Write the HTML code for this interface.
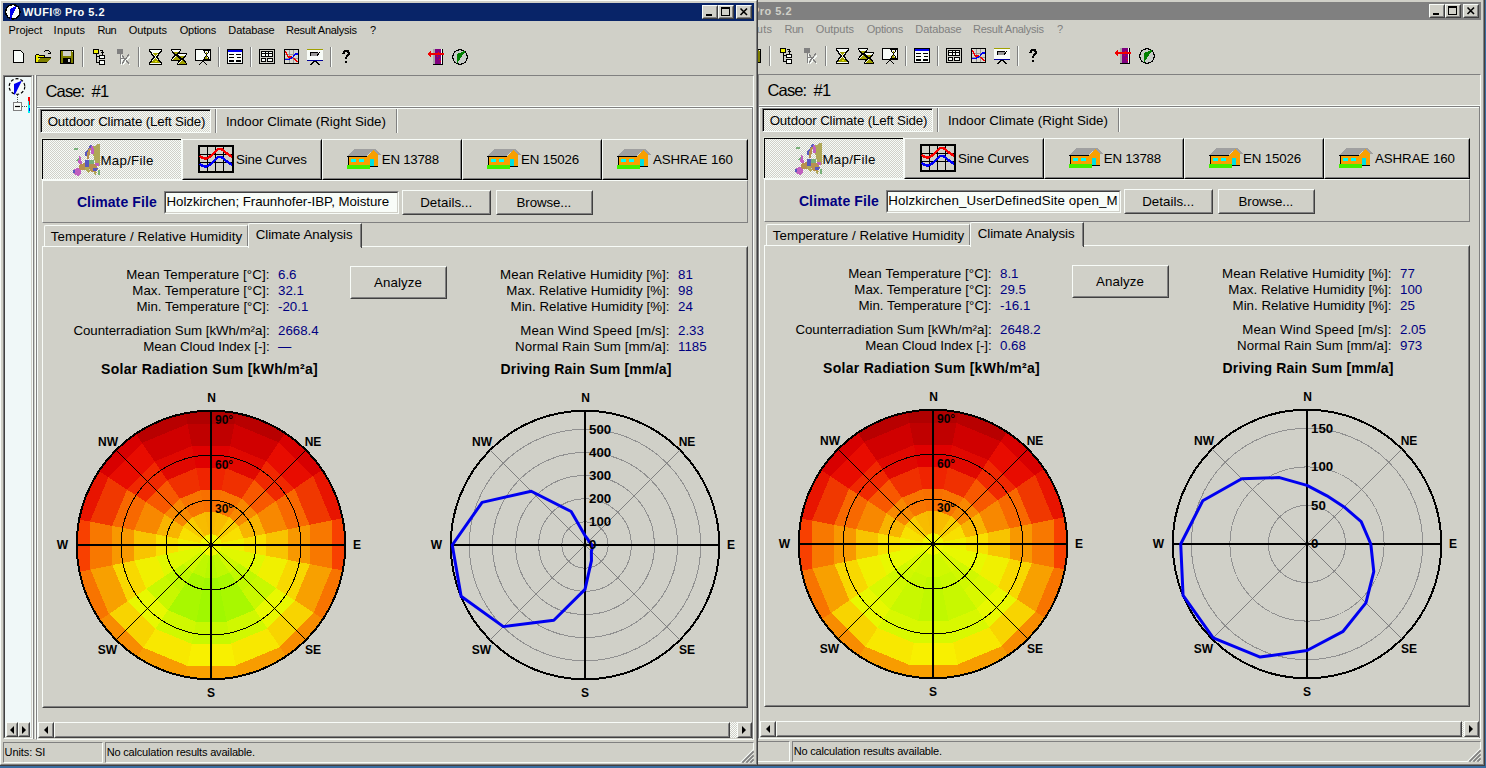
<!DOCTYPE html>
<html><head><meta charset="utf-8"><title>WUFI Pro 5.2</title>
<style>html,body{margin:0;padding:0} body{width:1486px;height:768px;position:relative;overflow:hidden;background:#386ca0;font-family:'Liberation Sans', sans-serif}</style>
</head><body>
<div style="position:absolute;left:0;top:0;width:1486px;height:768px;clip-path:inset(-2px 1px 2px 686px)">
<div style="position:absolute;left:686px;top:-2px;width:799px;height:768px;box-sizing:border-box;border-top:1px solid #d0d0c8;border-left:1px solid #d0d0c8;border-bottom:1px solid #404040;border-right:1px solid #404040;background:#d0d0c8;"></div>
<div style="position:absolute;left:687px;top:-1px;width:797px;height:766px;box-sizing:border-box;border-top:1px solid #f8fcf8;border-left:1px solid #f8fcf8;border-bottom:1px solid #808080;border-right:1px solid #808080;"></div>
<div style="position:absolute;left:690px;top:2px;width:791px;height:18px;background:#808080"></div>
<svg style="position:absolute;left:692px;top:3px" width="16" height="16" viewBox="0 0 16 16" shape-rendering="crispEdges" shape-rendering="auto"><circle cx="7.8" cy="7.8" r="7.2" fill="#f8fcf8" stroke="#000000" stroke-width="1.5"/><polygon points="5,5.2 11.8,1.8 5.6,15.6 5,15.6" fill="#0000f0"/></svg>
<div style="position:absolute;top:5.69px;font:bold 11px/11px 'Liberation Sans', sans-serif;color:#d0d0c8;white-space:pre;left:709.90px;letter-spacing:0.473px;">WUFI® Pro 5.2</div>
<div style="position:absolute;left:1429px;top:4px;width:16px;height:14px;box-sizing:border-box;border-top:1px solid #f8fcf8;border-left:1px solid #f8fcf8;border-bottom:1px solid #404040;border-right:1px solid #404040;background:#d0d0c8;"></div><div style="position:absolute;left:1430px;top:5px;width:14px;height:12px;box-sizing:border-box;border-top:1px solid #d0d0c8;border-left:1px solid #d0d0c8;border-bottom:1px solid #808080;border-right:1px solid #808080;"></div><div style="position:absolute;left:1433px;top:13px;width:6px;height:2px;background:#000000"></div>
<div style="position:absolute;left:1445px;top:4px;width:16px;height:14px;box-sizing:border-box;border-top:1px solid #f8fcf8;border-left:1px solid #f8fcf8;border-bottom:1px solid #404040;border-right:1px solid #404040;background:#d0d0c8;"></div><div style="position:absolute;left:1446px;top:5px;width:14px;height:12px;box-sizing:border-box;border-top:1px solid #d0d0c8;border-left:1px solid #d0d0c8;border-bottom:1px solid #808080;border-right:1px solid #808080;"></div><div style="position:absolute;left:1448px;top:6px;width:9px;height:9px;box-sizing:border-box;border:1px solid #000000;border-top-width:2px"></div>
<div style="position:absolute;left:1463px;top:4px;width:16px;height:14px;box-sizing:border-box;border-top:1px solid #f8fcf8;border-left:1px solid #f8fcf8;border-bottom:1px solid #404040;border-right:1px solid #404040;background:#d0d0c8;"></div><div style="position:absolute;left:1464px;top:5px;width:14px;height:12px;box-sizing:border-box;border-top:1px solid #d0d0c8;border-left:1px solid #d0d0c8;border-bottom:1px solid #808080;border-right:1px solid #808080;"></div><svg style="position:absolute;left:1463px;top:4px" width="16" height="14"><path d="M4.5 3.5 L11 10 M11 3.5 L4.5 10" stroke="#000000" stroke-width="1.6"/></svg>
<div style="position:absolute;top:23.69px;font:normal 11px/11px 'Liberation Sans', sans-serif;color:#808080;white-space:pre;left:695.60px;letter-spacing:-0.097px;">Project</div>
<div style="position:absolute;top:23.69px;font:normal 11px/11px 'Liberation Sans', sans-serif;color:#808080;white-space:pre;left:740.60px;letter-spacing:0.307px;">Inputs</div>
<div style="position:absolute;top:23.69px;font:normal 11px/11px 'Liberation Sans', sans-serif;color:#808080;white-space:pre;left:784.40px;letter-spacing:-0.431px;">Run</div>
<div style="position:absolute;top:23.69px;font:normal 11px/11px 'Liberation Sans', sans-serif;color:#808080;white-space:pre;left:815.70px;letter-spacing:-0.054px;">Outputs</div>
<div style="position:absolute;top:23.69px;font:normal 11px/11px 'Liberation Sans', sans-serif;color:#808080;white-space:pre;left:866.80px;letter-spacing:-0.252px;">Options</div>
<div style="position:absolute;top:23.69px;font:normal 11px/11px 'Liberation Sans', sans-serif;color:#808080;white-space:pre;left:915.30px;letter-spacing:-0.096px;">Database</div>
<div style="position:absolute;top:23.69px;font:normal 11px/11px 'Liberation Sans', sans-serif;color:#808080;white-space:pre;left:973.10px;letter-spacing:-0.271px;">Result Analysis</div>
<div style="position:absolute;top:23.69px;font:normal 11px/11px 'Liberation Sans', sans-serif;color:#808080;white-space:pre;left:1057.00px;letter-spacing:-0.500px;">?</div>
<svg style="position:absolute;left:700px;top:49px" width="11" height="13" viewBox="0 0 11 13" shape-rendering="crispEdges" ><rect x="0" y="0" width="8" height="1" fill="#000000"/><rect x="0" y="0" width="1" height="13" fill="#000000"/><rect x="0" y="12" width="11" height="1" fill="#000000"/><rect x="10" y="3" width="1" height="10" fill="#000000"/><rect x="8" y="1" width="1" height="1" fill="#000000"/><rect x="9" y="2" width="1" height="1" fill="#000000"/><rect x="1" y="1" width="7" height="11" fill="#f8fcf8"/><rect x="8" y="2" width="1" height="10" fill="#f8fcf8"/><rect x="9" y="3" width="1" height="9" fill="#f8fcf8"/></svg>
<svg style="position:absolute;left:722px;top:49px" width="16" height="13" viewBox="0 0 16 13" shape-rendering="crispEdges" ><rect x="10" y="0" width="4" height="1" fill="#000000"/><rect x="9" y="1" width="1" height="1" fill="#000000"/><rect x="14" y="1" width="1" height="1" fill="#000000"/><rect x="15" y="2" width="1" height="2" fill="#000000"/><rect x="14" y="3" width="1" height="1" fill="#000000"/><rect x="13" y="3" width="3" height="1" fill="#000000"/><rect x="1" y="4" width="3" height="1" fill="#000000"/><rect x="0" y="5" width="1" height="8" fill="#000000"/><rect x="4" y="5" width="6" height="1" fill="#000000"/><rect x="1" y="5" width="3" height="7" fill="#f0f000"/><rect x="4" y="6" width="6" height="1" fill="#f0f000"/><rect x="9" y="6" width="1" height="1" fill="#000000"/><polygon points="2,13 5,8 16,8 12,13" fill="#808000"/><rect x="0" y="12" width="12" height="1" fill="#000000"/><rect x="3" y="7" width="13" height="1" fill="#000000"/></svg>
<svg style="position:absolute;left:747px;top:49px" width="14" height="14" viewBox="0 0 14 14" shape-rendering="crispEdges" ><rect x="0" y="0" width="14" height="14" fill="#000000"/><rect x="1" y="1" width="12" height="12" fill="#808000"/><rect x="3" y="1" width="8" height="5" fill="#d0d0c8"/><rect x="3" y="8" width="8" height="5" fill="#000000"/><rect x="8" y="9" width="2" height="3" fill="#d0d0c8"/><rect x="12" y="1" width="1" height="1" fill="#f8fcf8"/></svg>
<div style="position:absolute;left:769px;top:46px;width:1px;height:20px;background:#808080"></div><div style="position:absolute;left:770px;top:46px;width:1px;height:20px;background:#f8fcf8"></div>
<svg style="position:absolute;left:780px;top:48px" width="12" height="16" viewBox="0 0 12 16" shape-rendering="crispEdges" ><rect x="0" y="0" width="6" height="5" fill="#000000"/><rect x="1" y="1" width="4" height="3" fill="#f0f000"/><rect x="3" y="5" width="1" height="9" fill="#000000"/><rect x="3" y="7" width="3" height="1" fill="#000000"/><rect x="3" y="13" width="3" height="1" fill="#000000"/><rect x="7" y="1" width="3" height="1" fill="#000000"/><rect x="9" y="2" width="1" height="1" fill="#000000"/><rect x="8" y="3" width="3" height="1" fill="#000000"/><rect x="9" y="4" width="1" height="2" fill="#000000"/><rect x="6" y="6" width="6" height="4" fill="#000000"/><rect x="7" y="7" width="4" height="2" fill="#f8fcf8"/><rect x="6" y="11" width="6" height="5" fill="#000000"/><rect x="7" y="12" width="4" height="3" fill="#f8fcf8"/></svg>
<svg style="position:absolute;left:804px;top:48px" width="15" height="16" viewBox="0 0 15 16" shape-rendering="crispEdges" shape-rendering="auto"><g transform="translate(1,1)" opacity="1"><path d="M3.5 5 V16 M4 10 H9 M5 7 L12 15 M12 6 L5 15" stroke="#f8fcf8" stroke-width="1.2" fill="none"/></g><rect x="0" y="0" width="6" height="5" fill="#808080"/><rect x="1" y="0" width="4" height="1" fill="#808080"/><rect x="3" y="5" width="1" height="10" fill="#808080"/><path d="M4 9.5 H10 M5 6.5 L12 14.5 M12 5.5 L5 14.5" stroke="#808080" stroke-width="1.3" fill="none"/><rect x="7" y="8" width="2" height="1" fill="#d0d0c8"/></svg>
<div style="position:absolute;left:825px;top:46px;width:1px;height:20px;background:#808080"></div><div style="position:absolute;left:826px;top:46px;width:1px;height:20px;background:#f8fcf8"></div>
<svg style="position:absolute;left:836px;top:48px" width="13" height="16" viewBox="0 0 13 16" shape-rendering="crispEdges" shape-rendering="auto"><path d="M0.5 0.5 H12.5 V2 L7.5 8 L12.5 14 V15.5 H0.5 V14 L5.5 8 L0.5 2 Z" fill="#f8fcf8" stroke="#000000" stroke-width="1.4"/><path d="M4 4 H9 L6.5 7 Z M6.5 9 L11 14 H2 Z" fill="#a0a000"/><rect x="6" y="12" width="2" height="1" fill="#f0f000"/></svg>
<svg style="position:absolute;left:858px;top:48px" width="17" height="16" viewBox="0 0 17 16" shape-rendering="crispEdges" shape-rendering="auto"><g><path d="M0.5 0.5 H9.5 V1.5 L5.5 6 L9.5 10.5 V11.5 H0.5 V10.5 L4.5 6 L0.5 1.5 Z" fill="#f8fcf8" stroke="#000000" stroke-width="1.2"/><path d="M3 3 H7 L5 5.5 Z M5 7 L8.5 10.5 H1.5 Z" fill="#a0a000"/></g><g transform="translate(6,4)"><path d="M0.5 0.5 H9.5 V1.5 L5.5 6 L9.5 10.5 V11.5 H0.5 V10.5 L4.5 6 L0.5 1.5 Z" fill="#f8fcf8" stroke="#000000" stroke-width="1.2"/><path d="M3 3 H7 L5 5.5 Z M5 7 L8.5 10.5 H1.5 Z" fill="#a0a000"/></g></svg>
<svg style="position:absolute;left:882px;top:48px" width="16" height="16" viewBox="0 0 16 16" shape-rendering="crispEdges" shape-rendering="auto"><rect x="0.5" y="0.5" width="15" height="11" fill="#f8fcf8" stroke="#000000"/><path d="M8.5 1.5 H14.5 L11.5 6 L14.5 10.5 H8.5 L11.5 6 Z" fill="#f8fcf8" stroke="#000000" stroke-width="1"/><path d="M10 2.5 H13 L11.5 5 Z M11.5 7 L13.5 10 H9.5 Z" fill="#a0a000"/><path d="M4 16 L8 12 L12 16" stroke="#000000" fill="none"/></svg>
<div style="position:absolute;left:905px;top:46px;width:1px;height:20px;background:#808080"></div><div style="position:absolute;left:906px;top:46px;width:1px;height:20px;background:#f8fcf8"></div>
<svg style="position:absolute;left:914px;top:48px" width="16" height="15" viewBox="0 0 16 15" shape-rendering="crispEdges" ><rect x="0" y="0" width="16" height="15" fill="#000000"/><rect x="1" y="1" width="14" height="13" fill="#f8fcf8"/><rect x="1" y="1" width="14" height="2" fill="#0000f0"/><rect x="2" y="5" width="5" height="1" fill="#000000"/><rect x="9" y="5" width="5" height="1" fill="#000000"/><rect x="2" y="8" width="5" height="1" fill="#000000"/><rect x="10" y="8" width="4" height="1" fill="#000000"/><rect x="2" y="11" width="5" height="2" fill="#000000"/><rect x="9" y="11" width="5" height="2" fill="#000000"/></svg>
<div style="position:absolute;left:937px;top:46px;width:1px;height:20px;background:#808080"></div><div style="position:absolute;left:938px;top:46px;width:1px;height:20px;background:#f8fcf8"></div>
<svg style="position:absolute;left:946px;top:48px" width="16" height="15" viewBox="0 0 16 15" shape-rendering="crispEdges" ><rect x="0" y="0" width="16" height="15" fill="#000000"/><rect x="1" y="1" width="14" height="13" fill="#d0d0c8"/><rect x="2" y="2" width="12" height="1" fill="#000000"/><rect x="2" y="2" width="1" height="6" fill="#000000"/><rect x="13" y="2" width="1" height="6" fill="#000000"/><rect x="2" y="4" width="12" height="1" fill="#000000"/><rect x="2" y="7" width="12" height="1" fill="#000000"/><rect x="6" y="2" width="1" height="6" fill="#000000"/><rect x="9" y="2" width="1" height="6" fill="#000000"/><rect x="3" y="3" width="3" height="1" fill="#f8fcf8"/><rect x="7" y="3" width="2" height="1" fill="#f8fcf8"/><rect x="10" y="3" width="3" height="1" fill="#f8fcf8"/><rect x="3" y="5" width="3" height="2" fill="#f8fcf8"/><rect x="7" y="5" width="2" height="2" fill="#f8fcf8"/><rect x="10" y="5" width="3" height="2" fill="#f8fcf8"/><rect x="2" y="9" width="5" height="4" fill="#000000"/><rect x="3" y="10" width="3" height="2" fill="#f8fcf8"/><rect x="8" y="9" width="6" height="4" fill="#000000"/><rect x="9" y="10" width="4" height="2" fill="#f8fcf8"/></svg>
<svg style="position:absolute;left:971px;top:48px" width="15" height="15" viewBox="0 0 15 15" shape-rendering="crispEdges" shape-rendering="auto"><rect x="0" y="0" width="15" height="15" fill="#000000"/><rect x="1" y="1" width="13" height="13" fill="#d8d8d0"/><rect x="5" y="1" width="1" height="13" fill="#989898"/><rect x="9" y="1" width="1" height="13" fill="#989898"/><rect x="1" y="5" width="13" height="1" fill="#989898"/><rect x="1" y="9" width="13" height="1" fill="#989898"/><path d="M1.5 2 L4 8 L8 8 L13.5 13" stroke="#f00000" fill="none" stroke-width="1.2"/><path d="M1.5 11 L6 10 L9 8 L11 5 H13.5" stroke="#0000f0" fill="none" stroke-width="1.2"/></svg>
<svg style="position:absolute;left:994px;top:48px" width="16" height="16" viewBox="0 0 16 16" shape-rendering="crispEdges" shape-rendering="auto"><rect x="0" y="0" width="16" height="1" fill="#a0a000"/><rect x="0" y="1" width="16" height="11" fill="#f8fcf8"/><rect x="0" y="11" width="16" height="1" fill="#000080"/><rect x="1" y="11" width="14" height="1" fill="#0000a0"/><rect x="3" y="3" width="8" height="1" fill="#000000"/><rect x="3" y="3" width="1" height="4" fill="#000000"/><rect x="4" y="4" width="7" height="3" fill="#989898"/><path d="M10 7 L13 3" stroke="#000000"/><path d="M3 16 L8 12 L13 16" stroke="#000000" fill="none" stroke-width="1.2"/></svg>
<div style="position:absolute;left:1017px;top:46px;width:1px;height:20px;background:#808080"></div><div style="position:absolute;left:1018px;top:46px;width:1px;height:20px;background:#f8fcf8"></div>
<svg style="position:absolute;left:1029px;top:49px" width="8" height="13" viewBox="0 0 8 13" shape-rendering="crispEdges" shape-rendering="auto"><path d="M1.5 3.5 Q1.5 0.8 4 0.8 Q6.8 0.8 6.8 3.5 Q6.8 5 4.8 6.5 Q4 7.2 4 9" stroke="#000000" stroke-width="2.2" fill="none"/><rect x="3" y="10.5" width="2.4" height="2.4" fill="#000000"/></svg>
<svg style="position:absolute;left:1115px;top:48px" width="16" height="16" viewBox="0 0 16 16" shape-rendering="crispEdges" shape-rendering="auto"><rect x="5" y="15" width="10" height="1" fill="#000000"/><rect x="14" y="0" width="1" height="16" fill="#000000"/><rect x="5" y="0" width="2" height="15" fill="#a8a8a8"/><rect x="7" y="0" width="6" height="15" fill="#800080"/><rect x="13" y="0" width="1" height="15" fill="#f8fcf8"/><path d="M0.5 5 H15.5" stroke="#f00000" stroke-width="1.6"/><path d="M3 2.5 L0.5 5 L3 7.5" stroke="#f00000" stroke-width="1.6" fill="none"/><rect x="10" y="3" width="1" height="1" fill="#f80000"/><rect x="9" y="7" width="1" height="1" fill="#f80000"/><rect x="11" y="10" width="1" height="1" fill="#f80000"/><rect x="12" y="12" width="1" height="1" fill="#f80000"/></svg>
<svg style="position:absolute;left:1139px;top:48px" width="16" height="16" viewBox="0 0 16 16" shape-rendering="crispEdges" shape-rendering="auto"><circle cx="8" cy="8" r="7.3" fill="#c8ccc8" stroke="#000000" stroke-width="1.1"/><polygon points="4.5,5 14,1.5 4.5,15" fill="#008000"/></svg>
<div style="position:absolute;left:758px;top:74px;width:723px;height:665px;box-sizing:border-box;border-top:1px solid #808080;border-left:1px solid #808080;border-bottom:1px solid #f8fcf8;border-right:1px solid #f8fcf8;"></div>
<div style="position:absolute;top:82.03px;font:normal 16.5px/16.5px 'Liberation Sans', sans-serif;color:#000000;white-space:pre;left:767.60px;letter-spacing:-0.893px;">Case:  #1</div>
<div style="position:absolute;left:759px;top:105px;width:721px;height:1px;background:#f8fcf8"></div>
<div style="position:absolute;left:759px;top:106px;width:721px;height:1px;background:#808080"></div>
<div style="position:absolute;left:759px;top:107px;width:1px;height:631px;background:#f8fcf8"></div>
<div style="position:absolute;left:759px;top:107px;width:721px;height:1px;background:#f8fcf8"></div>
<div style="position:absolute;left:1479px;top:107px;width:1px;height:631px;background:#808080"></div>
<div style="position:absolute;left:762px;top:108px;width:171px;height:24px;box-sizing:border-box;border-top:1px solid #808080;border-left:1px solid #808080;border-bottom:1px solid #f8fcf8;border-right:1px solid #f8fcf8;background-color:#f8fcf8;background-image:linear-gradient(45deg,#d0d0c8 25%,transparent 25%,transparent 75%,#d0d0c8 75%),linear-gradient(45deg,#d0d0c8 25%,transparent 25%,transparent 75%,#d0d0c8 75%);background-size:2px 2px;background-position:0 0,1px 1px;"></div><div style="position:absolute;left:763px;top:109px;width:169px;height:22px;box-sizing:border-box;border-top:1px solid #000000;border-left:1px solid #000000"></div>
<div style="position:absolute;top:113.74px;font:normal 13.3px/13.3px 'Liberation Sans', sans-serif;color:#000000;white-space:pre;left:769.70px;letter-spacing:-0.158px;">Outdoor Climate (Left Side)</div>
<div style="position:absolute;left:937px;top:108px;width:1px;height:24px;background:#808080"></div><div style="position:absolute;left:938px;top:108px;width:1px;height:24px;background:#f8fcf8"></div>
<div style="position:absolute;top:113.74px;font:normal 13.3px/13.3px 'Liberation Sans', sans-serif;color:#000000;white-space:pre;left:947.90px;letter-spacing:-0.013px;">Indoor Climate (Right Side)</div>
<div style="position:absolute;left:1118px;top:108px;width:1px;height:24px;background:#808080"></div><div style="position:absolute;left:1119px;top:108px;width:1px;height:24px;background:#f8fcf8"></div>
<div style="position:absolute;left:763px;top:137px;width:141px;height:42px;box-sizing:border-box;border-top:1px solid #e0e4d8;border-left:1px solid #e0e4d8;border-bottom:1px solid #f8fcf8;border-right:1px solid #f8fcf8;background-color:#f8fcf8;background-image:linear-gradient(45deg,#d0d0c8 25%,transparent 25%,transparent 75%,#d0d0c8 75%),linear-gradient(45deg,#d0d0c8 25%,transparent 25%,transparent 75%,#d0d0c8 75%);background-size:2px 2px;background-position:0 0,1px 1px;"></div><div style="position:absolute;left:764px;top:138px;width:139px;height:40px;box-sizing:border-box;border-top:1px solid #000000;border-left:1px solid #000000"></div>
<svg style="position:absolute;left:792px;top:141px" width="32" height="36" viewBox="0 0 32 36" shape-rendering="crispEdges" shape-rendering="crispEdges"><polygon points="4,6 8,6 8,8 4,8" fill="#78b078"/><polygon points="23,4 26,4 27,2 30,2 30,24 26,24 24,16 23,12" fill="#b0a858"/><polygon points="20,3 22,3 21,6 18,10 17,14 15,14 15,11 18,7" fill="#5858c0"/><polygon points="19,6 21,6 20,10 19,17 17,17 17,11" fill="#b89050"/><polygon points="21,4 23,4 24,8 24,12 21,12 21,8" fill="#c060c0"/><polygon points="9,14 11,15 12,22 9,22 8,20" fill="#c060c0"/><polygon points="6,18 8,16 9,17 7,20" fill="#78b078"/><polygon points="10,22 15,21 16,26 14,28 10,28 9,25" fill="#b89050"/><polygon points="15,18 19,18 19,25 15,25" fill="#5858c0"/><polygon points="19,18 24,18 24,22 19,22" fill="#78b078"/><polygon points="19,22 26,22 28,27 25,30 21,30 19,26" fill="#b89050"/><polygon points="25,21 29,21 29,24 26,24" fill="#c060c0"/><polygon points="15,25 19,25 20,30 18,31 15,28" fill="#b0a858"/><polygon points="23,26 28,26 27,29 23,29" fill="#5858c0"/><polygon points="4,27 8,26 11,28 11,31 8,34 5,33 3,31" fill="#c060c0"/><polygon points="3,28 5,28 5,31 3,31" fill="#5858c0"/><polygon points="24,30 27,30 26,33 24,32" fill="#b0a858"/><polygon points="28,28 30,28 30,33 28,33" fill="#78b078"/></svg>
<div style="position:absolute;top:152.74px;font:normal 13.3px/13.3px 'Liberation Sans', sans-serif;color:#000000;white-space:pre;left:822.50px;letter-spacing:0.258px;">Map/File</div>
<div style="position:absolute;left:904px;top:138px;width:140px;height:41px;box-sizing:border-box;border-top:1px solid #f8fcf8;border-left:1px solid #f8fcf8;border-bottom:1px solid #000000;border-right:1px solid #000000;"></div>
<div style="position:absolute;left:905px;top:139px;width:138px;height:39px;box-sizing:border-box;border-top:1px solid #d0d0c8;border-left:1px solid #d0d0c8;border-bottom:1px solid #808080;border-right:1px solid #808080;"></div>
<svg style="position:absolute;left:920px;top:144px" width="36" height="28" viewBox="0 0 36 28" shape-rendering="crispEdges" shape-rendering="auto"><rect x="0" y="0" width="36" height="28" fill="#000000"/><rect x="2" y="2" width="32" height="24" fill="#d0d0c8"/><rect x="9" y="2" width="1" height="24" fill="#000000"/><rect x="17" y="2" width="1" height="24" fill="#000000"/><rect x="25" y="2" width="1" height="24" fill="#000000"/><rect x="2" y="9" width="32" height="1" fill="#000000"/><rect x="2" y="17" width="32" height="1" fill="#000000"/><path d="M2 11 Q6 15 10 13 T18 6 T27 7 L34 12" stroke="#f80000" stroke-width="2.4" fill="none"/><path d="M2 19 Q6 23 10 21 T18 14 T27 15 L34 20" stroke="#0000f8" stroke-width="2.4" fill="none"/></svg>
<div style="position:absolute;top:151.74px;font:normal 13.3px/13.3px 'Liberation Sans', sans-serif;color:#000000;white-space:pre;left:958.00px;letter-spacing:-0.158px;">Sine Curves</div>
<div style="position:absolute;left:1044px;top:138px;width:140px;height:41px;box-sizing:border-box;border-top:1px solid #f8fcf8;border-left:1px solid #f8fcf8;border-bottom:1px solid #000000;border-right:1px solid #000000;"></div>
<div style="position:absolute;left:1045px;top:139px;width:138px;height:39px;box-sizing:border-box;border-top:1px solid #d0d0c8;border-left:1px solid #d0d0c8;border-bottom:1px solid #808080;border-right:1px solid #808080;"></div>
<svg style="position:absolute;left:1068px;top:148px" width="35" height="20" viewBox="0 0 35 20" shape-rendering="crispEdges" shape-rendering="auto"><polygon points="1,7 9,0 29,0 35,6 28,6 22,0" fill="#a0a0a0"/><polygon points="1,7 8,0 27,0 21,7" fill="#a0a0a0"/><path d="M1 7.5 H21" stroke="#000000" stroke-width="1.2"/><rect x="3" y="8" width="18" height="8" fill="#f8a000"/><polygon points="21,7 27,1 32,6 32,17 21,17" fill="#f8a000"/><rect x="5" y="10" width="5" height="3" fill="#00fcf8"/><rect x="13" y="10" width="5" height="3" fill="#00fcf8"/><rect x="24" y="10" width="4" height="7" fill="#00e0e0"/><rect x="1" y="16" width="23" height="4" fill="#40f000"/><rect x="24" y="17" width="8" height="1" fill="#000000"/><rect x="2" y="8" width="1" height="8" fill="#000000"/></svg>
<div style="position:absolute;top:151.74px;font:normal 13.3px/13.3px 'Liberation Sans', sans-serif;color:#000000;white-space:pre;left:1103.80px;letter-spacing:-0.264px;">EN 13788</div>
<div style="position:absolute;left:1184px;top:138px;width:140px;height:41px;box-sizing:border-box;border-top:1px solid #f8fcf8;border-left:1px solid #f8fcf8;border-bottom:1px solid #000000;border-right:1px solid #000000;"></div>
<div style="position:absolute;left:1185px;top:139px;width:138px;height:39px;box-sizing:border-box;border-top:1px solid #d0d0c8;border-left:1px solid #d0d0c8;border-bottom:1px solid #808080;border-right:1px solid #808080;"></div>
<svg style="position:absolute;left:1208px;top:148px" width="35" height="20" viewBox="0 0 35 20" shape-rendering="crispEdges" shape-rendering="auto"><polygon points="1,7 9,0 29,0 35,6 28,6 22,0" fill="#a0a0a0"/><polygon points="1,7 8,0 27,0 21,7" fill="#a0a0a0"/><path d="M1 7.5 H21" stroke="#000000" stroke-width="1.2"/><rect x="3" y="8" width="18" height="8" fill="#f8a000"/><polygon points="21,7 27,1 32,6 32,17 21,17" fill="#f8a000"/><rect x="5" y="10" width="5" height="3" fill="#00fcf8"/><rect x="13" y="10" width="5" height="3" fill="#00fcf8"/><rect x="24" y="10" width="4" height="7" fill="#00e0e0"/><rect x="1" y="16" width="23" height="4" fill="#40f000"/><rect x="24" y="17" width="8" height="1" fill="#000000"/><rect x="2" y="8" width="1" height="8" fill="#000000"/></svg>
<div style="position:absolute;top:151.74px;font:normal 13.3px/13.3px 'Liberation Sans', sans-serif;color:#000000;white-space:pre;left:1243.00px;letter-spacing:-0.149px;">EN 15026</div>
<div style="position:absolute;left:1324px;top:138px;width:146px;height:41px;box-sizing:border-box;border-top:1px solid #f8fcf8;border-left:1px solid #f8fcf8;border-bottom:1px solid #000000;border-right:1px solid #000000;"></div>
<div style="position:absolute;left:1325px;top:139px;width:144px;height:39px;box-sizing:border-box;border-top:1px solid #d0d0c8;border-left:1px solid #d0d0c8;border-bottom:1px solid #808080;border-right:1px solid #808080;"></div>
<svg style="position:absolute;left:1338px;top:148px" width="35" height="20" viewBox="0 0 35 20" shape-rendering="crispEdges" shape-rendering="auto"><polygon points="1,7 9,0 29,0 35,6 28,6 22,0" fill="#a0a0a0"/><polygon points="1,7 8,0 27,0 21,7" fill="#a0a0a0"/><path d="M1 7.5 H21" stroke="#000000" stroke-width="1.2"/><rect x="3" y="8" width="18" height="8" fill="#f8a000"/><polygon points="21,7 27,1 32,6 32,17 21,17" fill="#f8a000"/><rect x="5" y="10" width="5" height="3" fill="#00fcf8"/><rect x="13" y="10" width="5" height="3" fill="#00fcf8"/><rect x="24" y="10" width="4" height="7" fill="#00e0e0"/><rect x="1" y="16" width="23" height="4" fill="#40f000"/><rect x="24" y="17" width="8" height="1" fill="#000000"/><rect x="2" y="8" width="1" height="8" fill="#000000"/></svg>
<div style="position:absolute;top:151.74px;font:normal 13.3px/13.3px 'Liberation Sans', sans-serif;color:#000000;white-space:pre;left:1374.90px;letter-spacing:-0.052px;">ASHRAE 160</div>
<div style="position:absolute;left:764px;top:179px;width:706px;height:43px;box-sizing:border-box;border-top:1px solid #f8fcf8;border-left:1px solid #f8fcf8;border-bottom:1px solid #808080;border-right:1px solid #808080;"></div>
<div style="position:absolute;top:194.15px;font:bold 14px/14px 'Liberation Sans', sans-serif;color:#000080;white-space:pre;left:798.90px;letter-spacing:0.119px;">Climate File</div>
<div style="position:absolute;left:886px;top:190px;width:235px;height:23px;box-sizing:border-box;border-top:1px solid #808080;border-left:1px solid #808080;border-bottom:1px solid #f8fcf8;border-right:1px solid #f8fcf8;background:#f8fcf8;"></div><div style="position:absolute;left:887px;top:191px;width:233px;height:21px;box-sizing:border-box;border-top:1px solid #404040;border-left:1px solid #404040;border-bottom:1px solid #d0d0c8;border-right:1px solid #d0d0c8;"></div>
<div style="position:absolute;left:888px;top:192px;width:231px;height:19px;overflow:hidden"><div style="position:absolute;top:1.74px;font:normal 13.3px/13.3px 'Liberation Sans', sans-serif;color:#000000;white-space:pre;left:0.30px;letter-spacing:0.114px;">Holzkirchen_UserDefinedSite open_M</div></div>
<div style="position:absolute;left:1124px;top:189px;width:89px;height:25px;box-sizing:border-box;border-top:1px solid #f8fcf8;border-left:1px solid #f8fcf8;border-bottom:1px solid #404040;border-right:1px solid #404040;background:#d0d0c8;"></div><div style="position:absolute;left:1125px;top:190px;width:87px;height:23px;box-sizing:border-box;border-top:1px solid #d0d0c8;border-left:1px solid #d0d0c8;border-bottom:1px solid #808080;border-right:1px solid #808080;"></div>
<div style="position:absolute;top:194.74px;font:normal 13.3px/13.3px 'Liberation Sans', sans-serif;color:#000000;white-space:pre;left:1142.20px;letter-spacing:0.041px;">Details...</div>
<div style="position:absolute;left:1218px;top:189px;width:97px;height:25px;box-sizing:border-box;border-top:1px solid #f8fcf8;border-left:1px solid #f8fcf8;border-bottom:1px solid #404040;border-right:1px solid #404040;background:#d0d0c8;"></div><div style="position:absolute;left:1219px;top:190px;width:95px;height:23px;box-sizing:border-box;border-top:1px solid #d0d0c8;border-left:1px solid #d0d0c8;border-bottom:1px solid #808080;border-right:1px solid #808080;"></div>
<div style="position:absolute;top:194.74px;font:normal 13.3px/13.3px 'Liberation Sans', sans-serif;color:#000000;white-space:pre;left:1238.50px;letter-spacing:-0.078px;">Browse...</div>
<div style="position:absolute;left:766px;top:224px;width:204px;height:22px;box-sizing:border-box;border-top:1px solid #f8fcf8;border-left:1px solid #f8fcf8;border-top-left-radius:2px;border-right:1px solid #808080"></div>
<div style="position:absolute;top:228.74px;font:normal 13.3px/13.3px 'Liberation Sans', sans-serif;color:#000000;white-space:pre;left:772.80px;letter-spacing:0.072px;">Temperature / Relative Humidity</div>
<div style="position:absolute;left:764px;top:245px;width:706px;height:462px;box-sizing:border-box;border-top:1px solid #f8fcf8;border-left:1px solid #f8fcf8;border-bottom:1px solid #404040;border-right:1px solid #404040;"></div>
<div style="position:absolute;left:765px;top:246px;width:704px;height:460px;box-sizing:border-box;border-top:1px solid #d0d0c8;border-left:1px solid #d0d0c8;border-bottom:1px solid #808080;border-right:1px solid #808080;"></div>
<div style="position:absolute;left:970px;top:222px;width:114px;height:25px;box-sizing:border-box;border-top:1px solid #f8fcf8;border-left:1px solid #f8fcf8;border-right:1px solid #404040;background:#d0d0c8;border-top-left-radius:2px"></div>
<div style="position:absolute;left:1082px;top:223px;width:1px;height:23px;background:#808080"></div>
<div style="position:absolute;top:227.24px;font:normal 13.3px/13.3px 'Liberation Sans', sans-serif;color:#000000;white-space:pre;left:977.70px;letter-spacing:-0.042px;">Climate Analysis</div>
<div style="position:absolute;top:266.74px;font:normal 13.3px/13.3px 'Liberation Sans', sans-serif;color:#000000;white-space:pre;left:848.20px;letter-spacing:0.105px;">Mean Temperature [°C]:</div>
<div style="position:absolute;top:266.74px;font:normal 13.3px/13.3px 'Liberation Sans', sans-serif;color:#000080;white-space:pre;left:1000px;">8.1</div>
<div style="position:absolute;top:282.74px;font:normal 13.3px/13.3px 'Liberation Sans', sans-serif;color:#000000;white-space:pre;left:854.30px;letter-spacing:0.026px;">Max. Temperature [°C]:</div>
<div style="position:absolute;top:282.74px;font:normal 13.3px/13.3px 'Liberation Sans', sans-serif;color:#000080;white-space:pre;left:1000px;">29.5</div>
<div style="position:absolute;top:298.74px;font:normal 13.3px/13.3px 'Liberation Sans', sans-serif;color:#000000;white-space:pre;left:858.40px;letter-spacing:0.007px;">Min. Temperature [°C]:</div>
<div style="position:absolute;top:298.74px;font:normal 13.3px/13.3px 'Liberation Sans', sans-serif;color:#000080;white-space:pre;left:1000px;">-16.1</div>
<div style="position:absolute;top:322.74px;font:normal 13.3px/13.3px 'Liberation Sans', sans-serif;color:#000000;white-space:pre;left:795.40px;letter-spacing:-0.034px;">Counterradiation Sum [kWh/m²a]:</div>
<div style="position:absolute;top:322.74px;font:normal 13.3px/13.3px 'Liberation Sans', sans-serif;color:#000080;white-space:pre;left:1000px;">2648.2</div>
<div style="position:absolute;top:338.74px;font:normal 13.3px/13.3px 'Liberation Sans', sans-serif;color:#000000;white-space:pre;left:865.20px;letter-spacing:-0.032px;">Mean Cloud Index [-]:</div>
<div style="position:absolute;top:338.74px;font:normal 13.3px/13.3px 'Liberation Sans', sans-serif;color:#000080;white-space:pre;left:1000px;">0.68</div>
<div style="position:absolute;top:266.74px;font:normal 13.3px/13.3px 'Liberation Sans', sans-serif;color:#000000;white-space:pre;left:1222.10px;letter-spacing:0.088px;">Mean Relative Humidity [%]:</div>
<div style="position:absolute;top:266.74px;font:normal 13.3px/13.3px 'Liberation Sans', sans-serif;color:#000080;white-space:pre;left:1400px;">77</div>
<div style="position:absolute;top:282.74px;font:normal 13.3px/13.3px 'Liberation Sans', sans-serif;color:#000000;white-space:pre;left:1228.30px;letter-spacing:0.020px;">Max. Relative Humidity [%]:</div>
<div style="position:absolute;top:282.74px;font:normal 13.3px/13.3px 'Liberation Sans', sans-serif;color:#000080;white-space:pre;left:1400px;">100</div>
<div style="position:absolute;top:298.74px;font:normal 13.3px/13.3px 'Liberation Sans', sans-serif;color:#000000;white-space:pre;left:1232.60px;letter-spacing:-0.003px;">Min. Relative Humidity [%]:</div>
<div style="position:absolute;top:298.74px;font:normal 13.3px/13.3px 'Liberation Sans', sans-serif;color:#000080;white-space:pre;left:1400px;">25</div>
<div style="position:absolute;top:322.74px;font:normal 13.3px/13.3px 'Liberation Sans', sans-serif;color:#000000;white-space:pre;left:1242.20px;letter-spacing:0.172px;">Mean Wind Speed [m/s]:</div>
<div style="position:absolute;top:322.74px;font:normal 13.3px/13.3px 'Liberation Sans', sans-serif;color:#000080;white-space:pre;left:1400px;">2.05</div>
<div style="position:absolute;top:338.74px;font:normal 13.3px/13.3px 'Liberation Sans', sans-serif;color:#000000;white-space:pre;left:1237.10px;letter-spacing:0.061px;">Normal Rain Sum [mm/a]:</div>
<div style="position:absolute;top:338.74px;font:normal 13.3px/13.3px 'Liberation Sans', sans-serif;color:#000080;white-space:pre;left:1400px;">973</div>
<div style="position:absolute;left:1072px;top:265px;width:97px;height:33px;box-sizing:border-box;border-top:1px solid #f8fcf8;border-left:1px solid #f8fcf8;border-bottom:1px solid #404040;border-right:1px solid #404040;background:#d0d0c8;"></div><div style="position:absolute;left:1073px;top:266px;width:95px;height:31px;box-sizing:border-box;border-top:1px solid #d0d0c8;border-left:1px solid #d0d0c8;border-bottom:1px solid #808080;border-right:1px solid #808080;"></div>
<div style="position:absolute;top:274.74px;font:normal 13.3px/13.3px 'Liberation Sans', sans-serif;color:#000000;white-space:pre;left:1096.00px;letter-spacing:0.082px;">Analyze</div>
<div style="position:absolute;top:361.15px;font:bold 14px/14px 'Liberation Sans', sans-serif;color:#000000;white-space:pre;left:823.00px;letter-spacing:0.293px;">Solar Radiation Sum [kWh/m²a]</div>
<div style="position:absolute;top:361.15px;font:bold 14px/14px 'Liberation Sans', sans-serif;color:#000000;white-space:pre;left:1222.50px;letter-spacing:0.200px;">Driving Rain Sum [mm/a]</div>
<svg style="position:absolute;left:0;top:0" width="1486" height="768" shape-rendering="crispEdges">
<clipPath id="clip933"><circle cx="933" cy="544" r="134.5"/></clipPath>
<g clip-path="url(#clip933)" shape-rendering="crispEdges">
<circle cx="933" cy="544" r="11.6" fill="#f0f800"/>
<polygon points="930.85,533.47 926.14,510.44 939.86,510.44 935.15,533.47" fill="#f8b800"/>
<polygon points="935.04,533.45 939.51,510.37 952.18,515.62 939.02,535.09" fill="#f8bc00"/>
<polygon points="938.93,535.03 951.88,515.42 961.58,525.12 941.97,538.07" fill="#f8cc00"/>
<polygon points="941.91,537.98 961.38,524.82 966.63,537.49 943.55,541.96" fill="#f8e000"/>
<polygon points="943.53,541.85 966.56,537.14 966.56,550.86 943.53,546.15" fill="#f0f000"/>
<polygon points="943.55,546.04 966.63,550.51 961.38,563.18 941.91,550.02" fill="#e8f800"/>
<polygon points="941.97,549.93 961.58,562.88 951.88,572.58 938.93,552.97" fill="#d8f800"/>
<polygon points="939.02,552.91 952.18,572.38 939.51,577.63 935.04,554.55" fill="#d0f800"/>
<polygon points="935.15,554.53 939.86,577.56 926.14,577.56 930.85,554.53" fill="#d0f800"/>
<polygon points="930.96,554.55 926.49,577.63 913.82,572.38 926.98,552.91" fill="#d0f800"/>
<polygon points="927.07,552.97 914.12,572.58 904.42,562.88 924.03,549.93" fill="#d8f800"/>
<polygon points="924.09,550.02 904.62,563.18 899.37,550.51 922.45,546.04" fill="#e8f800"/>
<polygon points="922.47,546.15 899.44,550.86 899.44,537.14 922.47,541.85" fill="#f0f000"/>
<polygon points="922.45,541.96 899.37,537.49 904.62,524.82 924.09,537.98" fill="#f8e000"/>
<polygon points="924.03,538.07 904.42,525.12 914.12,515.42 927.07,535.03" fill="#f8cc00"/>
<polygon points="926.98,535.09 913.82,515.62 926.49,510.37 930.96,533.45" fill="#f8bc00"/>
<polygon points="926.34,511.42 921.64,488.40 944.36,488.40 939.66,511.42" fill="#f87000"/>
<polygon points="939.32,511.36 943.78,488.28 964.78,496.98 951.62,516.45" fill="#f87400"/>
<polygon points="951.33,516.26 964.28,496.65 980.35,512.72 960.74,525.67" fill="#f88800"/>
<polygon points="960.55,525.38 980.02,512.22 988.72,533.22 965.64,537.68" fill="#f8b400"/>
<polygon points="965.58,537.34 988.60,532.64 988.60,555.36 965.58,550.66" fill="#f8e000"/>
<polygon points="965.64,550.32 988.72,554.78 980.02,575.78 960.55,562.62" fill="#e8f800"/>
<polygon points="960.74,562.33 980.35,575.28 964.28,591.35 951.33,571.74" fill="#d0f800"/>
<polygon points="951.62,571.55 964.78,591.02 943.78,599.72 939.32,576.64" fill="#c8f800"/>
<polygon points="939.66,576.58 944.36,599.60 921.64,599.60 926.34,576.58" fill="#c0f800"/>
<polygon points="926.68,576.64 922.22,599.72 901.22,591.02 914.38,571.55" fill="#c8f800"/>
<polygon points="914.67,571.74 901.72,591.35 885.65,575.28 905.26,562.33" fill="#d0f800"/>
<polygon points="905.45,562.62 885.98,575.78 877.28,554.78 900.36,550.32" fill="#e8f800"/>
<polygon points="900.42,550.66 877.40,555.36 877.40,532.64 900.42,537.34" fill="#f8e000"/>
<polygon points="900.36,537.68 877.28,533.22 885.98,512.22 905.45,525.38" fill="#f8b400"/>
<polygon points="905.26,525.67 885.65,512.72 901.72,496.65 914.67,516.26" fill="#f88800"/>
<polygon points="914.38,516.45 901.22,496.98 922.22,488.28 926.68,511.36" fill="#f87400"/>
<polygon points="921.84,489.38 917.13,466.35 948.87,466.35 944.16,489.38" fill="#f02400"/>
<polygon points="943.59,489.27 948.05,466.19 977.37,478.34 964.22,497.81" fill="#f03000"/>
<polygon points="963.73,497.48 976.68,477.88 999.12,500.32 979.52,513.27" fill="#f85800"/>
<polygon points="979.19,512.78 998.66,499.63 1010.81,528.95 987.73,533.41" fill="#f88800"/>
<polygon points="987.62,532.84 1010.65,528.13 1010.65,559.87 987.62,555.16" fill="#f8c400"/>
<polygon points="987.73,554.59 1010.81,559.05 998.66,588.37 979.19,575.22" fill="#f0f000"/>
<polygon points="979.52,574.73 999.12,587.68 976.68,610.12 963.73,590.52" fill="#d8f800"/>
<polygon points="964.22,590.19 977.37,609.66 948.05,621.81 943.59,598.73" fill="#c8f800"/>
<polygon points="944.16,598.62 948.87,621.65 917.13,621.65 921.84,598.62" fill="#c0f800"/>
<polygon points="922.41,598.73 917.95,621.81 888.63,609.66 901.78,590.19" fill="#c8f800"/>
<polygon points="902.27,590.52 889.32,610.12 866.88,587.68 886.48,574.73" fill="#d8f800"/>
<polygon points="886.81,575.22 867.34,588.37 855.19,559.05 878.27,554.59" fill="#f0f000"/>
<polygon points="878.38,555.16 855.35,559.87 855.35,528.13 878.38,532.84" fill="#f8c400"/>
<polygon points="878.27,533.41 855.19,528.95 867.34,499.63 886.81,512.78" fill="#f88800"/>
<polygon points="886.48,513.27 866.88,500.32 889.32,477.88 902.27,497.48" fill="#f85800"/>
<polygon points="901.78,497.81 888.63,478.34 917.95,466.19 922.41,489.27" fill="#f03000"/>
<polygon points="917.33,467.33 912.63,444.31 953.37,444.31 948.67,467.33" fill="#e00000"/>
<polygon points="947.86,467.17 952.33,444.10 989.97,459.70 976.81,479.17" fill="#e00800"/>
<polygon points="976.13,478.71 989.09,459.10 1017.90,487.91 998.29,500.87" fill="#f02800"/>
<polygon points="997.83,500.19 1017.30,487.03 1032.90,524.67 1009.83,529.14" fill="#f86800"/>
<polygon points="1009.67,528.33 1032.69,523.63 1032.69,564.37 1009.67,559.67" fill="#f89800"/>
<polygon points="1009.83,558.86 1032.90,563.33 1017.30,600.97 997.83,587.81" fill="#f8d800"/>
<polygon points="998.29,587.13 1017.90,600.09 989.09,628.90 976.13,609.29" fill="#e8f800"/>
<polygon points="976.81,608.83 989.97,628.30 952.33,643.90 947.86,620.83" fill="#d8f800"/>
<polygon points="948.67,620.67 953.37,643.69 912.63,643.69 917.33,620.67" fill="#d8f800"/>
<polygon points="918.14,620.83 913.67,643.90 876.03,628.30 889.19,608.83" fill="#d8f800"/>
<polygon points="889.87,609.29 876.91,628.90 848.10,600.09 867.71,587.13" fill="#e8f800"/>
<polygon points="868.17,587.81 848.70,600.97 833.10,563.33 856.17,558.86" fill="#f8d800"/>
<polygon points="856.33,559.67 833.31,564.37 833.31,523.63 856.33,528.33" fill="#f89800"/>
<polygon points="856.17,529.14 833.10,524.67 848.70,487.03 868.17,500.19" fill="#f86800"/>
<polygon points="867.71,500.87 848.10,487.91 876.91,459.10 889.87,478.71" fill="#f02800"/>
<polygon points="889.19,479.17 876.03,459.70 913.67,444.10 918.14,467.17" fill="#e00800"/>
<polygon points="912.83,445.29 908.12,422.27 957.88,422.27 953.17,445.29" fill="#c00000"/>
<polygon points="952.14,445.08 956.60,422.01 1002.57,441.05 989.41,460.52" fill="#d00000"/>
<polygon points="988.53,459.94 1001.49,440.33 1036.67,475.51 1017.06,488.47" fill="#e80c00"/>
<polygon points="1016.48,487.59 1035.95,474.43 1054.99,520.40 1031.92,524.86" fill="#f03800"/>
<polygon points="1031.71,523.83 1054.73,519.12 1054.73,568.88 1031.71,564.17" fill="#f87800"/>
<polygon points="1031.92,563.14 1054.99,567.60 1035.95,613.57 1016.48,600.41" fill="#f8a000"/>
<polygon points="1017.06,599.53 1036.67,612.49 1001.49,647.67 988.53,628.06" fill="#f8d400"/>
<polygon points="989.41,627.48 1002.57,646.95 956.60,665.99 952.14,642.92" fill="#f8e800"/>
<polygon points="953.17,642.71 957.88,665.73 908.12,665.73 912.83,642.71" fill="#f8f000"/>
<polygon points="913.86,642.92 909.40,665.99 863.43,646.95 876.59,627.48" fill="#f8e800"/>
<polygon points="877.47,628.06 864.51,647.67 829.33,612.49 848.94,599.53" fill="#f8d400"/>
<polygon points="849.52,600.41 830.05,613.57 811.01,567.60 834.08,563.14" fill="#f8a000"/>
<polygon points="834.29,564.17 811.27,568.88 811.27,519.12 834.29,523.83" fill="#f87800"/>
<polygon points="834.08,524.86 811.01,520.40 830.05,474.43 849.52,487.59" fill="#f03800"/>
<polygon points="848.94,488.47 829.33,475.51 864.51,440.33 877.47,459.94" fill="#e80c00"/>
<polygon points="876.59,460.52 863.43,441.05 909.40,422.01 913.86,445.08" fill="#d00000"/>
<polygon points="908.32,423.25 902.87,396.55 963.13,396.55 957.68,423.25" fill="#b00000"/>
<polygon points="956.41,422.99 961.59,396.24 1017.27,419.30 1002.01,441.88" fill="#b80000"/>
<polygon points="1000.94,441.16 1015.96,418.43 1058.57,461.04 1035.84,476.06" fill="#d80000"/>
<polygon points="1035.12,474.99 1057.70,459.73 1080.76,515.41 1054.01,520.59" fill="#e81400"/>
<polygon points="1053.75,519.32 1080.45,513.87 1080.45,574.13 1053.75,568.68" fill="#f84000"/>
<polygon points="1054.01,567.41 1080.76,572.59 1057.70,628.27 1035.12,613.01" fill="#f87400"/>
<polygon points="1035.84,611.94 1058.57,626.96 1015.96,669.57 1000.94,646.84" fill="#f88c00"/>
<polygon points="1002.01,646.12 1017.27,668.70 961.59,691.76 956.41,665.01" fill="#f89c00"/>
<polygon points="957.68,664.75 963.13,691.45 902.87,691.45 908.32,664.75" fill="#f8a000"/>
<polygon points="909.59,665.01 904.41,691.76 848.73,668.70 863.99,646.12" fill="#f89c00"/>
<polygon points="865.06,646.84 850.04,669.57 807.43,626.96 830.16,611.94" fill="#f88c00"/>
<polygon points="830.88,613.01 808.30,628.27 785.24,572.59 811.99,567.41" fill="#f87400"/>
<polygon points="812.25,568.68 785.55,574.13 785.55,513.87 812.25,519.32" fill="#f84000"/>
<polygon points="811.99,520.59 785.24,515.41 808.30,459.73 830.88,474.99" fill="#e81400"/>
<polygon points="830.16,476.06 807.43,461.04 850.04,418.43 865.06,441.16" fill="#d80000"/>
<polygon points="863.99,441.88 848.73,419.30 904.41,396.24 909.59,422.99" fill="#b80000"/>
</g>
<circle cx="933" cy="544" r="45" fill="none" stroke="#000000" stroke-width="1"/>
<circle cx="933" cy="544" r="90" fill="none" stroke="#000000" stroke-width="1"/>
<circle cx="933" cy="544" r="134.3" fill="none" stroke="#000000" stroke-width="2"/>
<path d="M837.8941379304093 448.8941379304094 L1028.1058620695906 639.1058620695907 M1028.1058620695906 448.8941379304094 L837.8941379304093 639.1058620695907" stroke="#000000" stroke-width="1"/>
<path d="M933 409.5 V678.5 M798.5 544 H1067.5" stroke="#000000" stroke-width="2"/>
<circle cx="1307" cy="544" r="38.57" fill="none" stroke="#909090" stroke-width="1"/>
<circle cx="1307" cy="544" r="77.14" fill="none" stroke="#909090" stroke-width="1"/>
<circle cx="1307" cy="544" r="115.71" fill="none" stroke="#909090" stroke-width="1"/>
<circle cx="1307" cy="544" r="134.3" fill="none" stroke="#000000" stroke-width="2"/>
<path d="M1211.8941379304094 448.8941379304094 L1402.1058620695906 639.1058620695907 M1402.1058620695906 448.8941379304094 L1211.8941379304094 639.1058620695907" stroke="#808080" stroke-width="1"/>
<path d="M1307 409.5 V678.5 M1172.5 544 H1441.5" stroke="#000000" stroke-width="2"/>
<polygon points="1307.00,485.37 1326.96,495.82 1344.09,506.91 1361.17,521.56 1370.80,544.00 1373.78,571.66 1365.91,602.91 1343.16,631.31 1307.00,650.46 1260.18,657.04 1213.18,637.82 1183.06,595.34 1180.72,544.00 1202.73,500.81 1241.76,478.76 1279.49,477.58" fill="none" stroke="#0000f0" stroke-width="3" stroke-linejoin="round" shape-rendering="auto"/>
</svg>
<div style="position:absolute;top:390.64px;font:bold 12px/12px 'Liberation Sans', sans-serif;color:#000000;white-space:pre;left:583.5px;width:700px;text-align:center;">N</div>
<div style="position:absolute;top:686.14px;font:bold 12px/12px 'Liberation Sans', sans-serif;color:#000000;white-space:pre;left:583px;width:700px;text-align:center;">S</div>
<div style="position:absolute;top:538.14px;font:bold 12px/12px 'Liberation Sans', sans-serif;color:#000000;white-space:pre;left:434.5px;width:700px;text-align:center;">W</div>
<div style="position:absolute;top:538.14px;font:bold 12px/12px 'Liberation Sans', sans-serif;color:#000000;white-space:pre;left:729px;width:700px;text-align:center;">E</div>
<div style="position:absolute;top:434.64px;font:bold 12px/12px 'Liberation Sans', sans-serif;color:#000000;white-space:pre;left:480px;width:700px;text-align:center;">NW</div>
<div style="position:absolute;top:434.64px;font:bold 12px/12px 'Liberation Sans', sans-serif;color:#000000;white-space:pre;left:685px;width:700px;text-align:center;">NE</div>
<div style="position:absolute;top:643.14px;font:bold 12px/12px 'Liberation Sans', sans-serif;color:#000000;white-space:pre;left:479.5px;width:700px;text-align:center;">SW</div>
<div style="position:absolute;top:643.14px;font:bold 12px/12px 'Liberation Sans', sans-serif;color:#000000;white-space:pre;left:685px;width:700px;text-align:center;">SE</div>
<div style="position:absolute;top:390.64px;font:bold 12px/12px 'Liberation Sans', sans-serif;color:#000000;white-space:pre;left:957.5px;width:700px;text-align:center;">N</div>
<div style="position:absolute;top:686.14px;font:bold 12px/12px 'Liberation Sans', sans-serif;color:#000000;white-space:pre;left:957px;width:700px;text-align:center;">S</div>
<div style="position:absolute;top:538.14px;font:bold 12px/12px 'Liberation Sans', sans-serif;color:#000000;white-space:pre;left:808.5px;width:700px;text-align:center;">W</div>
<div style="position:absolute;top:538.14px;font:bold 12px/12px 'Liberation Sans', sans-serif;color:#000000;white-space:pre;left:1103px;width:700px;text-align:center;">E</div>
<div style="position:absolute;top:434.64px;font:bold 12px/12px 'Liberation Sans', sans-serif;color:#000000;white-space:pre;left:854px;width:700px;text-align:center;">NW</div>
<div style="position:absolute;top:434.64px;font:bold 12px/12px 'Liberation Sans', sans-serif;color:#000000;white-space:pre;left:1059px;width:700px;text-align:center;">NE</div>
<div style="position:absolute;top:643.14px;font:bold 12px/12px 'Liberation Sans', sans-serif;color:#000000;white-space:pre;left:853.5px;width:700px;text-align:center;">SW</div>
<div style="position:absolute;top:643.14px;font:bold 12px/12px 'Liberation Sans', sans-serif;color:#000000;white-space:pre;left:1059px;width:700px;text-align:center;">SE</div>
<div style="position:absolute;top:502.34px;font:bold 12px/12px 'Liberation Sans', sans-serif;color:#000000;white-space:pre;left:937px;">30°</div>
<div style="position:absolute;top:458.34px;font:bold 12px/12px 'Liberation Sans', sans-serif;color:#000000;white-space:pre;left:937px;">60°</div>
<div style="position:absolute;top:413.34px;font:bold 12px/12px 'Liberation Sans', sans-serif;color:#000000;white-space:pre;left:937px;">90°</div>
<div style="position:absolute;top:537.44px;font:bold 13.3px/13.3px 'Liberation Sans', sans-serif;color:#000000;white-space:pre;left:1311px;">0</div>
<div style="position:absolute;top:498.87px;font:bold 13.3px/13.3px 'Liberation Sans', sans-serif;color:#000000;white-space:pre;left:1311px;">50</div>
<div style="position:absolute;top:460.30px;font:bold 13.3px/13.3px 'Liberation Sans', sans-serif;color:#000000;white-space:pre;left:1311px;">100</div>
<div style="position:absolute;top:421.73px;font:bold 13.3px/13.3px 'Liberation Sans', sans-serif;color:#000000;white-space:pre;left:1311px;">150</div>
<div style="position:absolute;left:760px;top:721px;width:719px;height:16px;background:#d0d0c8"></div>
<div style="position:absolute;left:760px;top:721px;width:16px;height:16px;box-sizing:border-box;border-top:1px solid #f8fcf8;border-left:1px solid #f8fcf8;border-bottom:1px solid #404040;border-right:1px solid #404040;background:#d0d0c8;"></div><div style="position:absolute;left:761px;top:722px;width:14px;height:14px;box-sizing:border-box;border-top:1px solid #d0d0c8;border-left:1px solid #d0d0c8;border-bottom:1px solid #808080;border-right:1px solid #808080;"></div>
<svg style="position:absolute;left:0;top:0;overflow:visible" width="1" height="1"><polygon points="770,725 770,733 766,729" fill="#000000"/></svg>
<div style="position:absolute;left:776px;top:721px;width:686px;height:16px;box-sizing:border-box;border-top:1px solid #f8fcf8;border-left:1px solid #f8fcf8;border-bottom:1px solid #404040;border-right:1px solid #404040;background:#d0d0c8;"></div><div style="position:absolute;left:777px;top:722px;width:684px;height:14px;box-sizing:border-box;border-top:1px solid #d0d0c8;border-left:1px solid #d0d0c8;border-bottom:1px solid #808080;border-right:1px solid #808080;"></div>
<div style="position:absolute;left:1462px;top:721px;width:2px;height:16px;background-color:#f8fcf8;background-image:linear-gradient(45deg,#d0d0c8 25%,transparent 25%,transparent 75%,#d0d0c8 75%),linear-gradient(45deg,#d0d0c8 25%,transparent 25%,transparent 75%,#d0d0c8 75%);background-size:2px 2px;background-position:0 0,1px 1px;"></div>
<div style="position:absolute;left:1464px;top:721px;width:15px;height:16px;box-sizing:border-box;border-top:1px solid #f8fcf8;border-left:1px solid #f8fcf8;border-bottom:1px solid #404040;border-right:1px solid #404040;background:#d0d0c8;"></div><div style="position:absolute;left:1465px;top:722px;width:13px;height:14px;box-sizing:border-box;border-top:1px solid #d0d0c8;border-left:1px solid #d0d0c8;border-bottom:1px solid #808080;border-right:1px solid #808080;"></div>
<svg style="position:absolute;left:0;top:0;overflow:visible" width="1" height="1"><polygon points="1469,725 1469,733 1473,729" fill="#000000"/></svg>
<div style="position:absolute;left:690px;top:741px;width:100px;height:21px;box-sizing:border-box;border-top:1px solid #808080;border-left:1px solid #808080;border-bottom:1px solid #f8fcf8;border-right:1px solid #f8fcf8;"></div>
<div style="position:absolute;top:745.69px;font:normal 11px/11px 'Liberation Sans', sans-serif;color:#000000;white-space:pre;left:691.60px;letter-spacing:-0.101px;">Units: SI</div>
<div style="position:absolute;left:792px;top:741px;width:689px;height:21px;box-sizing:border-box;border-top:1px solid #808080;border-left:1px solid #808080;border-bottom:1px solid #f8fcf8;border-right:1px solid #f8fcf8;"></div>
<div style="position:absolute;top:745.69px;font:normal 11px/11px 'Liberation Sans', sans-serif;color:#000000;white-space:pre;left:793.70px;letter-spacing:-0.179px;">No calculation results available.</div>
<div style="position:absolute;left:1467px;top:748px;width:14px;height:14px;background:#d0d0c8"></div>
<svg style="position:absolute;left:1467px;top:748px" width="14" height="14"><path d="M14 0 L0 14" stroke="#f8fcf8" stroke-width="1.2"/><path d="M13.6 2.4 L2.4 13.6 M13.6 6.4 L6.4 13.6 M13.6 10.4 L10.4 13.6" stroke="#808080" stroke-width="1.7"/><path d="M14 4 L4 14 M14 8 L8 14 M14 12 L12 14" stroke="#f8fcf8" stroke-width="0.8" opacity="0.7"/></svg>
</div>
<div style="position:absolute;left:0;top:0;width:1486px;height:768px;clip-path:inset(-1px 728px 2px -1px)">
<div style="position:absolute;left:-1px;top:-1px;width:759px;height:767px;box-sizing:border-box;border-top:1px solid #d0d0c8;border-left:1px solid #d0d0c8;border-bottom:1px solid #404040;border-right:1px solid #404040;background:#d0d0c8;"></div>
<div style="position:absolute;left:0px;top:0px;width:757px;height:765px;box-sizing:border-box;border-top:1px solid #f8fcf8;border-left:1px solid #f8fcf8;border-bottom:1px solid #808080;border-right:1px solid #808080;"></div>
<div style="position:absolute;left:3px;top:3px;width:751px;height:18px;background:#082468"></div>
<svg style="position:absolute;left:5px;top:4px" width="16" height="16" viewBox="0 0 16 16" shape-rendering="crispEdges" shape-rendering="auto"><circle cx="7.8" cy="7.8" r="7.2" fill="#f8fcf8" stroke="#000000" stroke-width="1.5"/><polygon points="5,5.2 11.8,1.8 5.6,15.6 5,15.6" fill="#0000f0"/></svg>
<div style="position:absolute;top:6.69px;font:bold 11px/11px 'Liberation Sans', sans-serif;color:#f8fcf8;white-space:pre;left:22.90px;letter-spacing:0.473px;">WUFI® Pro 5.2</div>
<div style="position:absolute;left:702px;top:5px;width:16px;height:14px;box-sizing:border-box;border-top:1px solid #f8fcf8;border-left:1px solid #f8fcf8;border-bottom:1px solid #404040;border-right:1px solid #404040;background:#d0d0c8;"></div><div style="position:absolute;left:703px;top:6px;width:14px;height:12px;box-sizing:border-box;border-top:1px solid #d0d0c8;border-left:1px solid #d0d0c8;border-bottom:1px solid #808080;border-right:1px solid #808080;"></div><div style="position:absolute;left:706px;top:14px;width:6px;height:2px;background:#000000"></div>
<div style="position:absolute;left:718px;top:5px;width:16px;height:14px;box-sizing:border-box;border-top:1px solid #f8fcf8;border-left:1px solid #f8fcf8;border-bottom:1px solid #404040;border-right:1px solid #404040;background:#d0d0c8;"></div><div style="position:absolute;left:719px;top:6px;width:14px;height:12px;box-sizing:border-box;border-top:1px solid #d0d0c8;border-left:1px solid #d0d0c8;border-bottom:1px solid #808080;border-right:1px solid #808080;"></div><div style="position:absolute;left:721px;top:7px;width:9px;height:9px;box-sizing:border-box;border:1px solid #000000;border-top-width:2px"></div>
<div style="position:absolute;left:736px;top:5px;width:16px;height:14px;box-sizing:border-box;border-top:1px solid #f8fcf8;border-left:1px solid #f8fcf8;border-bottom:1px solid #404040;border-right:1px solid #404040;background:#d0d0c8;"></div><div style="position:absolute;left:737px;top:6px;width:14px;height:12px;box-sizing:border-box;border-top:1px solid #d0d0c8;border-left:1px solid #d0d0c8;border-bottom:1px solid #808080;border-right:1px solid #808080;"></div><svg style="position:absolute;left:736px;top:5px" width="16" height="14"><path d="M4.5 3.5 L11 10 M11 3.5 L4.5 10" stroke="#000000" stroke-width="1.6"/></svg>
<div style="position:absolute;top:24.69px;font:normal 11px/11px 'Liberation Sans', sans-serif;color:#000000;white-space:pre;left:8.60px;letter-spacing:-0.097px;">Project</div>
<div style="position:absolute;top:24.69px;font:normal 11px/11px 'Liberation Sans', sans-serif;color:#000000;white-space:pre;left:53.60px;letter-spacing:0.307px;">Inputs</div>
<div style="position:absolute;top:24.69px;font:normal 11px/11px 'Liberation Sans', sans-serif;color:#000000;white-space:pre;left:97.40px;letter-spacing:-0.431px;">Run</div>
<div style="position:absolute;top:24.69px;font:normal 11px/11px 'Liberation Sans', sans-serif;color:#000000;white-space:pre;left:128.70px;letter-spacing:-0.054px;">Outputs</div>
<div style="position:absolute;top:24.69px;font:normal 11px/11px 'Liberation Sans', sans-serif;color:#000000;white-space:pre;left:179.80px;letter-spacing:-0.252px;">Options</div>
<div style="position:absolute;top:24.69px;font:normal 11px/11px 'Liberation Sans', sans-serif;color:#000000;white-space:pre;left:228.30px;letter-spacing:-0.096px;">Database</div>
<div style="position:absolute;top:24.69px;font:normal 11px/11px 'Liberation Sans', sans-serif;color:#000000;white-space:pre;left:286.10px;letter-spacing:-0.271px;">Result Analysis</div>
<div style="position:absolute;top:24.69px;font:normal 11px/11px 'Liberation Sans', sans-serif;color:#000000;white-space:pre;left:370.00px;letter-spacing:-0.500px;">?</div>
<svg style="position:absolute;left:13px;top:50px" width="11" height="13" viewBox="0 0 11 13" shape-rendering="crispEdges" ><rect x="0" y="0" width="8" height="1" fill="#000000"/><rect x="0" y="0" width="1" height="13" fill="#000000"/><rect x="0" y="12" width="11" height="1" fill="#000000"/><rect x="10" y="3" width="1" height="10" fill="#000000"/><rect x="8" y="1" width="1" height="1" fill="#000000"/><rect x="9" y="2" width="1" height="1" fill="#000000"/><rect x="1" y="1" width="7" height="11" fill="#f8fcf8"/><rect x="8" y="2" width="1" height="10" fill="#f8fcf8"/><rect x="9" y="3" width="1" height="9" fill="#f8fcf8"/></svg>
<svg style="position:absolute;left:35px;top:50px" width="16" height="13" viewBox="0 0 16 13" shape-rendering="crispEdges" ><rect x="10" y="0" width="4" height="1" fill="#000000"/><rect x="9" y="1" width="1" height="1" fill="#000000"/><rect x="14" y="1" width="1" height="1" fill="#000000"/><rect x="15" y="2" width="1" height="2" fill="#000000"/><rect x="14" y="3" width="1" height="1" fill="#000000"/><rect x="13" y="3" width="3" height="1" fill="#000000"/><rect x="1" y="4" width="3" height="1" fill="#000000"/><rect x="0" y="5" width="1" height="8" fill="#000000"/><rect x="4" y="5" width="6" height="1" fill="#000000"/><rect x="1" y="5" width="3" height="7" fill="#f0f000"/><rect x="4" y="6" width="6" height="1" fill="#f0f000"/><rect x="9" y="6" width="1" height="1" fill="#000000"/><polygon points="2,13 5,8 16,8 12,13" fill="#808000"/><rect x="0" y="12" width="12" height="1" fill="#000000"/><rect x="3" y="7" width="13" height="1" fill="#000000"/></svg>
<svg style="position:absolute;left:60px;top:50px" width="14" height="14" viewBox="0 0 14 14" shape-rendering="crispEdges" ><rect x="0" y="0" width="14" height="14" fill="#000000"/><rect x="1" y="1" width="12" height="12" fill="#808000"/><rect x="3" y="1" width="8" height="5" fill="#d0d0c8"/><rect x="3" y="8" width="8" height="5" fill="#000000"/><rect x="8" y="9" width="2" height="3" fill="#d0d0c8"/><rect x="12" y="1" width="1" height="1" fill="#f8fcf8"/></svg>
<div style="position:absolute;left:82px;top:47px;width:1px;height:20px;background:#808080"></div><div style="position:absolute;left:83px;top:47px;width:1px;height:20px;background:#f8fcf8"></div>
<svg style="position:absolute;left:93px;top:49px" width="12" height="16" viewBox="0 0 12 16" shape-rendering="crispEdges" ><rect x="0" y="0" width="6" height="5" fill="#000000"/><rect x="1" y="1" width="4" height="3" fill="#f0f000"/><rect x="3" y="5" width="1" height="9" fill="#000000"/><rect x="3" y="7" width="3" height="1" fill="#000000"/><rect x="3" y="13" width="3" height="1" fill="#000000"/><rect x="7" y="1" width="3" height="1" fill="#000000"/><rect x="9" y="2" width="1" height="1" fill="#000000"/><rect x="8" y="3" width="3" height="1" fill="#000000"/><rect x="9" y="4" width="1" height="2" fill="#000000"/><rect x="6" y="6" width="6" height="4" fill="#000000"/><rect x="7" y="7" width="4" height="2" fill="#f8fcf8"/><rect x="6" y="11" width="6" height="5" fill="#000000"/><rect x="7" y="12" width="4" height="3" fill="#f8fcf8"/></svg>
<svg style="position:absolute;left:117px;top:49px" width="15" height="16" viewBox="0 0 15 16" shape-rendering="crispEdges" shape-rendering="auto"><g transform="translate(1,1)" opacity="1"><path d="M3.5 5 V16 M4 10 H9 M5 7 L12 15 M12 6 L5 15" stroke="#f8fcf8" stroke-width="1.2" fill="none"/></g><rect x="0" y="0" width="6" height="5" fill="#808080"/><rect x="1" y="0" width="4" height="1" fill="#808080"/><rect x="3" y="5" width="1" height="10" fill="#808080"/><path d="M4 9.5 H10 M5 6.5 L12 14.5 M12 5.5 L5 14.5" stroke="#808080" stroke-width="1.3" fill="none"/><rect x="7" y="8" width="2" height="1" fill="#d0d0c8"/></svg>
<div style="position:absolute;left:138px;top:47px;width:1px;height:20px;background:#808080"></div><div style="position:absolute;left:139px;top:47px;width:1px;height:20px;background:#f8fcf8"></div>
<svg style="position:absolute;left:149px;top:49px" width="13" height="16" viewBox="0 0 13 16" shape-rendering="crispEdges" shape-rendering="auto"><path d="M0.5 0.5 H12.5 V2 L7.5 8 L12.5 14 V15.5 H0.5 V14 L5.5 8 L0.5 2 Z" fill="#f8fcf8" stroke="#000000" stroke-width="1.4"/><path d="M4 4 H9 L6.5 7 Z M6.5 9 L11 14 H2 Z" fill="#a0a000"/><rect x="6" y="12" width="2" height="1" fill="#f0f000"/></svg>
<svg style="position:absolute;left:171px;top:49px" width="17" height="16" viewBox="0 0 17 16" shape-rendering="crispEdges" shape-rendering="auto"><g><path d="M0.5 0.5 H9.5 V1.5 L5.5 6 L9.5 10.5 V11.5 H0.5 V10.5 L4.5 6 L0.5 1.5 Z" fill="#f8fcf8" stroke="#000000" stroke-width="1.2"/><path d="M3 3 H7 L5 5.5 Z M5 7 L8.5 10.5 H1.5 Z" fill="#a0a000"/></g><g transform="translate(6,4)"><path d="M0.5 0.5 H9.5 V1.5 L5.5 6 L9.5 10.5 V11.5 H0.5 V10.5 L4.5 6 L0.5 1.5 Z" fill="#f8fcf8" stroke="#000000" stroke-width="1.2"/><path d="M3 3 H7 L5 5.5 Z M5 7 L8.5 10.5 H1.5 Z" fill="#a0a000"/></g></svg>
<svg style="position:absolute;left:195px;top:49px" width="16" height="16" viewBox="0 0 16 16" shape-rendering="crispEdges" shape-rendering="auto"><rect x="0.5" y="0.5" width="15" height="11" fill="#f8fcf8" stroke="#000000"/><path d="M8.5 1.5 H14.5 L11.5 6 L14.5 10.5 H8.5 L11.5 6 Z" fill="#f8fcf8" stroke="#000000" stroke-width="1"/><path d="M10 2.5 H13 L11.5 5 Z M11.5 7 L13.5 10 H9.5 Z" fill="#a0a000"/><path d="M4 16 L8 12 L12 16" stroke="#000000" fill="none"/></svg>
<div style="position:absolute;left:218px;top:47px;width:1px;height:20px;background:#808080"></div><div style="position:absolute;left:219px;top:47px;width:1px;height:20px;background:#f8fcf8"></div>
<svg style="position:absolute;left:227px;top:49px" width="16" height="15" viewBox="0 0 16 15" shape-rendering="crispEdges" ><rect x="0" y="0" width="16" height="15" fill="#000000"/><rect x="1" y="1" width="14" height="13" fill="#f8fcf8"/><rect x="1" y="1" width="14" height="2" fill="#0000f0"/><rect x="2" y="5" width="5" height="1" fill="#000000"/><rect x="9" y="5" width="5" height="1" fill="#000000"/><rect x="2" y="8" width="5" height="1" fill="#000000"/><rect x="10" y="8" width="4" height="1" fill="#000000"/><rect x="2" y="11" width="5" height="2" fill="#000000"/><rect x="9" y="11" width="5" height="2" fill="#000000"/></svg>
<div style="position:absolute;left:250px;top:47px;width:1px;height:20px;background:#808080"></div><div style="position:absolute;left:251px;top:47px;width:1px;height:20px;background:#f8fcf8"></div>
<svg style="position:absolute;left:259px;top:49px" width="16" height="15" viewBox="0 0 16 15" shape-rendering="crispEdges" ><rect x="0" y="0" width="16" height="15" fill="#000000"/><rect x="1" y="1" width="14" height="13" fill="#d0d0c8"/><rect x="2" y="2" width="12" height="1" fill="#000000"/><rect x="2" y="2" width="1" height="6" fill="#000000"/><rect x="13" y="2" width="1" height="6" fill="#000000"/><rect x="2" y="4" width="12" height="1" fill="#000000"/><rect x="2" y="7" width="12" height="1" fill="#000000"/><rect x="6" y="2" width="1" height="6" fill="#000000"/><rect x="9" y="2" width="1" height="6" fill="#000000"/><rect x="3" y="3" width="3" height="1" fill="#f8fcf8"/><rect x="7" y="3" width="2" height="1" fill="#f8fcf8"/><rect x="10" y="3" width="3" height="1" fill="#f8fcf8"/><rect x="3" y="5" width="3" height="2" fill="#f8fcf8"/><rect x="7" y="5" width="2" height="2" fill="#f8fcf8"/><rect x="10" y="5" width="3" height="2" fill="#f8fcf8"/><rect x="2" y="9" width="5" height="4" fill="#000000"/><rect x="3" y="10" width="3" height="2" fill="#f8fcf8"/><rect x="8" y="9" width="6" height="4" fill="#000000"/><rect x="9" y="10" width="4" height="2" fill="#f8fcf8"/></svg>
<svg style="position:absolute;left:284px;top:49px" width="15" height="15" viewBox="0 0 15 15" shape-rendering="crispEdges" shape-rendering="auto"><rect x="0" y="0" width="15" height="15" fill="#000000"/><rect x="1" y="1" width="13" height="13" fill="#d8d8d0"/><rect x="5" y="1" width="1" height="13" fill="#989898"/><rect x="9" y="1" width="1" height="13" fill="#989898"/><rect x="1" y="5" width="13" height="1" fill="#989898"/><rect x="1" y="9" width="13" height="1" fill="#989898"/><path d="M1.5 2 L4 8 L8 8 L13.5 13" stroke="#f00000" fill="none" stroke-width="1.2"/><path d="M1.5 11 L6 10 L9 8 L11 5 H13.5" stroke="#0000f0" fill="none" stroke-width="1.2"/></svg>
<svg style="position:absolute;left:307px;top:49px" width="16" height="16" viewBox="0 0 16 16" shape-rendering="crispEdges" shape-rendering="auto"><rect x="0" y="0" width="16" height="1" fill="#a0a000"/><rect x="0" y="1" width="16" height="11" fill="#f8fcf8"/><rect x="0" y="11" width="16" height="1" fill="#000080"/><rect x="1" y="11" width="14" height="1" fill="#0000a0"/><rect x="3" y="3" width="8" height="1" fill="#000000"/><rect x="3" y="3" width="1" height="4" fill="#000000"/><rect x="4" y="4" width="7" height="3" fill="#989898"/><path d="M10 7 L13 3" stroke="#000000"/><path d="M3 16 L8 12 L13 16" stroke="#000000" fill="none" stroke-width="1.2"/></svg>
<div style="position:absolute;left:330px;top:47px;width:1px;height:20px;background:#808080"></div><div style="position:absolute;left:331px;top:47px;width:1px;height:20px;background:#f8fcf8"></div>
<svg style="position:absolute;left:342px;top:50px" width="8" height="13" viewBox="0 0 8 13" shape-rendering="crispEdges" shape-rendering="auto"><path d="M1.5 3.5 Q1.5 0.8 4 0.8 Q6.8 0.8 6.8 3.5 Q6.8 5 4.8 6.5 Q4 7.2 4 9" stroke="#000000" stroke-width="2.2" fill="none"/><rect x="3" y="10.5" width="2.4" height="2.4" fill="#000000"/></svg>
<svg style="position:absolute;left:428px;top:49px" width="16" height="16" viewBox="0 0 16 16" shape-rendering="crispEdges" shape-rendering="auto"><rect x="5" y="15" width="10" height="1" fill="#000000"/><rect x="14" y="0" width="1" height="16" fill="#000000"/><rect x="5" y="0" width="2" height="15" fill="#a8a8a8"/><rect x="7" y="0" width="6" height="15" fill="#800080"/><rect x="13" y="0" width="1" height="15" fill="#f8fcf8"/><path d="M0.5 5 H15.5" stroke="#f00000" stroke-width="1.6"/><path d="M3 2.5 L0.5 5 L3 7.5" stroke="#f00000" stroke-width="1.6" fill="none"/><rect x="10" y="3" width="1" height="1" fill="#f80000"/><rect x="9" y="7" width="1" height="1" fill="#f80000"/><rect x="11" y="10" width="1" height="1" fill="#f80000"/><rect x="12" y="12" width="1" height="1" fill="#f80000"/></svg>
<svg style="position:absolute;left:452px;top:49px" width="16" height="16" viewBox="0 0 16 16" shape-rendering="crispEdges" shape-rendering="auto"><circle cx="8" cy="8" r="7.3" fill="#c8ccc8" stroke="#000000" stroke-width="1.1"/><polygon points="4.5,5 14,1.5 4.5,15" fill="#008000"/></svg>
<div style="position:absolute;left:3px;top:75px;width:30px;height:664px;box-sizing:border-box;border-top:1px solid #808080;border-left:1px solid #808080;border-bottom:1px solid #f8fcf8;border-right:1px solid #f8fcf8;background:#f0f8f8;"></div>
<div style="position:absolute;left:4px;top:76px;width:28px;height:662px;box-sizing:border-box;border-top:1px solid #404040;border-left:1px solid #404040;border-bottom:1px solid #d0d0c8;border-right:1px solid #d0d0c8;"></div>
<div style="position:absolute;left:33px;top:75px;width:1px;height:664px;background:#808080"></div>
<div style="position:absolute;left:35px;top:75px;width:1px;height:664px;background:#f8fcf8"></div>
<svg style="position:absolute;left:0;top:0" width="40" height="120"><circle cx="17" cy="86.5" r="7.8" fill="#f8fcf8" stroke="#000000" stroke-width="1.2" stroke-dasharray="3 2"/><polygon points="14,84 22,80.5 15,94.5 14,94.5" fill="#0000f0"/><path d="M17.5 95 V102 M22 106.5 H28" stroke="#505450" stroke-dasharray="1 1"/><rect x="13.5" y="102.5" width="8" height="8" fill="#f8fcf8" stroke="#808080"/><path d="M15 106.5 H20" stroke="#000000" stroke-width="1.2"/><rect x="28" y="97" width="2" height="14" fill="#00f0f0"/><rect x="28" y="97" width="2" height="4" fill="#f80000"/><rect x="29" y="97" width="1" height="8" fill="#f80000"/><rect x="29" y="108" width="1" height="3" fill="#0000f8"/><rect x="28" y="111" width="2" height="2" fill="#00f0f0"/></svg>
<div style="position:absolute;left:6px;top:722px;width:12px;height:15px;box-sizing:border-box;border-top:1px solid #f8fcf8;border-left:1px solid #f8fcf8;border-bottom:1px solid #404040;border-right:1px solid #404040;background:#d0d0c8;"></div><div style="position:absolute;left:7px;top:723px;width:10px;height:13px;box-sizing:border-box;border-top:1px solid #d0d0c8;border-left:1px solid #d0d0c8;border-bottom:1px solid #808080;border-right:1px solid #808080;"></div>
<div style="position:absolute;left:18px;top:722px;width:12px;height:15px;box-sizing:border-box;border-top:1px solid #f8fcf8;border-left:1px solid #f8fcf8;border-bottom:1px solid #404040;border-right:1px solid #404040;background:#d0d0c8;"></div><div style="position:absolute;left:19px;top:723px;width:10px;height:13px;box-sizing:border-box;border-top:1px solid #d0d0c8;border-left:1px solid #d0d0c8;border-bottom:1px solid #808080;border-right:1px solid #808080;"></div>
<svg style="position:absolute;left:0;top:0;overflow:visible" width="1" height="1"><polygon points="14,726 14,734 10,730" fill="#000000"/></svg>
<svg style="position:absolute;left:0;top:0;overflow:visible" width="1" height="1"><polygon points="22,726 22,734 26,730" fill="#000000"/></svg>
<div style="position:absolute;left:36px;top:75px;width:718px;height:665px;box-sizing:border-box;border-top:1px solid #808080;border-left:1px solid #808080;border-bottom:1px solid #f8fcf8;border-right:1px solid #f8fcf8;"></div>
<div style="position:absolute;top:83.03px;font:normal 16.5px/16.5px 'Liberation Sans', sans-serif;color:#000000;white-space:pre;left:45.60px;letter-spacing:-0.893px;">Case:  #1</div>
<div style="position:absolute;left:37px;top:106px;width:716px;height:1px;background:#f8fcf8"></div>
<div style="position:absolute;left:37px;top:107px;width:716px;height:1px;background:#808080"></div>
<div style="position:absolute;left:37px;top:108px;width:1px;height:631px;background:#f8fcf8"></div>
<div style="position:absolute;left:37px;top:108px;width:716px;height:1px;background:#f8fcf8"></div>
<div style="position:absolute;left:752px;top:108px;width:1px;height:631px;background:#808080"></div>
<div style="position:absolute;left:40px;top:109px;width:171px;height:24px;box-sizing:border-box;border-top:1px solid #808080;border-left:1px solid #808080;border-bottom:1px solid #f8fcf8;border-right:1px solid #f8fcf8;background-color:#f8fcf8;background-image:linear-gradient(45deg,#d0d0c8 25%,transparent 25%,transparent 75%,#d0d0c8 75%),linear-gradient(45deg,#d0d0c8 25%,transparent 25%,transparent 75%,#d0d0c8 75%);background-size:2px 2px;background-position:0 0,1px 1px;"></div><div style="position:absolute;left:41px;top:110px;width:169px;height:22px;box-sizing:border-box;border-top:1px solid #000000;border-left:1px solid #000000"></div>
<div style="position:absolute;top:114.74px;font:normal 13.3px/13.3px 'Liberation Sans', sans-serif;color:#000000;white-space:pre;left:47.70px;letter-spacing:-0.158px;">Outdoor Climate (Left Side)</div>
<div style="position:absolute;left:215px;top:109px;width:1px;height:24px;background:#808080"></div><div style="position:absolute;left:216px;top:109px;width:1px;height:24px;background:#f8fcf8"></div>
<div style="position:absolute;top:114.74px;font:normal 13.3px/13.3px 'Liberation Sans', sans-serif;color:#000000;white-space:pre;left:225.90px;letter-spacing:-0.013px;">Indoor Climate (Right Side)</div>
<div style="position:absolute;left:396px;top:109px;width:1px;height:24px;background:#808080"></div><div style="position:absolute;left:397px;top:109px;width:1px;height:24px;background:#f8fcf8"></div>
<div style="position:absolute;left:41px;top:138px;width:141px;height:42px;box-sizing:border-box;border-top:1px solid #e0e4d8;border-left:1px solid #e0e4d8;border-bottom:1px solid #f8fcf8;border-right:1px solid #f8fcf8;background-color:#f8fcf8;background-image:linear-gradient(45deg,#d0d0c8 25%,transparent 25%,transparent 75%,#d0d0c8 75%),linear-gradient(45deg,#d0d0c8 25%,transparent 25%,transparent 75%,#d0d0c8 75%);background-size:2px 2px;background-position:0 0,1px 1px;"></div><div style="position:absolute;left:42px;top:139px;width:139px;height:40px;box-sizing:border-box;border-top:1px solid #000000;border-left:1px solid #000000"></div>
<svg style="position:absolute;left:70px;top:142px" width="32" height="36" viewBox="0 0 32 36" shape-rendering="crispEdges" shape-rendering="crispEdges"><polygon points="4,6 8,6 8,8 4,8" fill="#78b078"/><polygon points="23,4 26,4 27,2 30,2 30,24 26,24 24,16 23,12" fill="#b0a858"/><polygon points="20,3 22,3 21,6 18,10 17,14 15,14 15,11 18,7" fill="#5858c0"/><polygon points="19,6 21,6 20,10 19,17 17,17 17,11" fill="#b89050"/><polygon points="21,4 23,4 24,8 24,12 21,12 21,8" fill="#c060c0"/><polygon points="9,14 11,15 12,22 9,22 8,20" fill="#c060c0"/><polygon points="6,18 8,16 9,17 7,20" fill="#78b078"/><polygon points="10,22 15,21 16,26 14,28 10,28 9,25" fill="#b89050"/><polygon points="15,18 19,18 19,25 15,25" fill="#5858c0"/><polygon points="19,18 24,18 24,22 19,22" fill="#78b078"/><polygon points="19,22 26,22 28,27 25,30 21,30 19,26" fill="#b89050"/><polygon points="25,21 29,21 29,24 26,24" fill="#c060c0"/><polygon points="15,25 19,25 20,30 18,31 15,28" fill="#b0a858"/><polygon points="23,26 28,26 27,29 23,29" fill="#5858c0"/><polygon points="4,27 8,26 11,28 11,31 8,34 5,33 3,31" fill="#c060c0"/><polygon points="3,28 5,28 5,31 3,31" fill="#5858c0"/><polygon points="24,30 27,30 26,33 24,32" fill="#b0a858"/><polygon points="28,28 30,28 30,33 28,33" fill="#78b078"/></svg>
<div style="position:absolute;top:153.74px;font:normal 13.3px/13.3px 'Liberation Sans', sans-serif;color:#000000;white-space:pre;left:100.50px;letter-spacing:0.258px;">Map/File</div>
<div style="position:absolute;left:182px;top:139px;width:140px;height:41px;box-sizing:border-box;border-top:1px solid #f8fcf8;border-left:1px solid #f8fcf8;border-bottom:1px solid #000000;border-right:1px solid #000000;"></div>
<div style="position:absolute;left:183px;top:140px;width:138px;height:39px;box-sizing:border-box;border-top:1px solid #d0d0c8;border-left:1px solid #d0d0c8;border-bottom:1px solid #808080;border-right:1px solid #808080;"></div>
<svg style="position:absolute;left:198px;top:145px" width="36" height="28" viewBox="0 0 36 28" shape-rendering="crispEdges" shape-rendering="auto"><rect x="0" y="0" width="36" height="28" fill="#000000"/><rect x="2" y="2" width="32" height="24" fill="#d0d0c8"/><rect x="9" y="2" width="1" height="24" fill="#000000"/><rect x="17" y="2" width="1" height="24" fill="#000000"/><rect x="25" y="2" width="1" height="24" fill="#000000"/><rect x="2" y="9" width="32" height="1" fill="#000000"/><rect x="2" y="17" width="32" height="1" fill="#000000"/><path d="M2 11 Q6 15 10 13 T18 6 T27 7 L34 12" stroke="#f80000" stroke-width="2.4" fill="none"/><path d="M2 19 Q6 23 10 21 T18 14 T27 15 L34 20" stroke="#0000f8" stroke-width="2.4" fill="none"/></svg>
<div style="position:absolute;top:152.74px;font:normal 13.3px/13.3px 'Liberation Sans', sans-serif;color:#000000;white-space:pre;left:236.00px;letter-spacing:-0.158px;">Sine Curves</div>
<div style="position:absolute;left:322px;top:139px;width:140px;height:41px;box-sizing:border-box;border-top:1px solid #f8fcf8;border-left:1px solid #f8fcf8;border-bottom:1px solid #000000;border-right:1px solid #000000;"></div>
<div style="position:absolute;left:323px;top:140px;width:138px;height:39px;box-sizing:border-box;border-top:1px solid #d0d0c8;border-left:1px solid #d0d0c8;border-bottom:1px solid #808080;border-right:1px solid #808080;"></div>
<svg style="position:absolute;left:346px;top:149px" width="35" height="20" viewBox="0 0 35 20" shape-rendering="crispEdges" shape-rendering="auto"><polygon points="1,7 9,0 29,0 35,6 28,6 22,0" fill="#a0a0a0"/><polygon points="1,7 8,0 27,0 21,7" fill="#a0a0a0"/><path d="M1 7.5 H21" stroke="#000000" stroke-width="1.2"/><rect x="3" y="8" width="18" height="8" fill="#f8a000"/><polygon points="21,7 27,1 32,6 32,17 21,17" fill="#f8a000"/><rect x="5" y="10" width="5" height="3" fill="#00fcf8"/><rect x="13" y="10" width="5" height="3" fill="#00fcf8"/><rect x="24" y="10" width="4" height="7" fill="#00e0e0"/><rect x="1" y="16" width="23" height="4" fill="#40f000"/><rect x="24" y="17" width="8" height="1" fill="#000000"/><rect x="2" y="8" width="1" height="8" fill="#000000"/></svg>
<div style="position:absolute;top:152.74px;font:normal 13.3px/13.3px 'Liberation Sans', sans-serif;color:#000000;white-space:pre;left:381.80px;letter-spacing:-0.264px;">EN 13788</div>
<div style="position:absolute;left:462px;top:139px;width:140px;height:41px;box-sizing:border-box;border-top:1px solid #f8fcf8;border-left:1px solid #f8fcf8;border-bottom:1px solid #000000;border-right:1px solid #000000;"></div>
<div style="position:absolute;left:463px;top:140px;width:138px;height:39px;box-sizing:border-box;border-top:1px solid #d0d0c8;border-left:1px solid #d0d0c8;border-bottom:1px solid #808080;border-right:1px solid #808080;"></div>
<svg style="position:absolute;left:486px;top:149px" width="35" height="20" viewBox="0 0 35 20" shape-rendering="crispEdges" shape-rendering="auto"><polygon points="1,7 9,0 29,0 35,6 28,6 22,0" fill="#a0a0a0"/><polygon points="1,7 8,0 27,0 21,7" fill="#a0a0a0"/><path d="M1 7.5 H21" stroke="#000000" stroke-width="1.2"/><rect x="3" y="8" width="18" height="8" fill="#f8a000"/><polygon points="21,7 27,1 32,6 32,17 21,17" fill="#f8a000"/><rect x="5" y="10" width="5" height="3" fill="#00fcf8"/><rect x="13" y="10" width="5" height="3" fill="#00fcf8"/><rect x="24" y="10" width="4" height="7" fill="#00e0e0"/><rect x="1" y="16" width="23" height="4" fill="#40f000"/><rect x="24" y="17" width="8" height="1" fill="#000000"/><rect x="2" y="8" width="1" height="8" fill="#000000"/></svg>
<div style="position:absolute;top:152.74px;font:normal 13.3px/13.3px 'Liberation Sans', sans-serif;color:#000000;white-space:pre;left:521.00px;letter-spacing:-0.149px;">EN 15026</div>
<div style="position:absolute;left:602px;top:139px;width:146px;height:41px;box-sizing:border-box;border-top:1px solid #f8fcf8;border-left:1px solid #f8fcf8;border-bottom:1px solid #000000;border-right:1px solid #000000;"></div>
<div style="position:absolute;left:603px;top:140px;width:144px;height:39px;box-sizing:border-box;border-top:1px solid #d0d0c8;border-left:1px solid #d0d0c8;border-bottom:1px solid #808080;border-right:1px solid #808080;"></div>
<svg style="position:absolute;left:616px;top:149px" width="35" height="20" viewBox="0 0 35 20" shape-rendering="crispEdges" shape-rendering="auto"><polygon points="1,7 9,0 29,0 35,6 28,6 22,0" fill="#a0a0a0"/><polygon points="1,7 8,0 27,0 21,7" fill="#a0a0a0"/><path d="M1 7.5 H21" stroke="#000000" stroke-width="1.2"/><rect x="3" y="8" width="18" height="8" fill="#f8a000"/><polygon points="21,7 27,1 32,6 32,17 21,17" fill="#f8a000"/><rect x="5" y="10" width="5" height="3" fill="#00fcf8"/><rect x="13" y="10" width="5" height="3" fill="#00fcf8"/><rect x="24" y="10" width="4" height="7" fill="#00e0e0"/><rect x="1" y="16" width="23" height="4" fill="#40f000"/><rect x="24" y="17" width="8" height="1" fill="#000000"/><rect x="2" y="8" width="1" height="8" fill="#000000"/></svg>
<div style="position:absolute;top:152.74px;font:normal 13.3px/13.3px 'Liberation Sans', sans-serif;color:#000000;white-space:pre;left:652.90px;letter-spacing:-0.052px;">ASHRAE 160</div>
<div style="position:absolute;left:42px;top:180px;width:706px;height:43px;box-sizing:border-box;border-top:1px solid #f8fcf8;border-left:1px solid #f8fcf8;border-bottom:1px solid #808080;border-right:1px solid #808080;"></div>
<div style="position:absolute;top:195.15px;font:bold 14px/14px 'Liberation Sans', sans-serif;color:#000080;white-space:pre;left:76.90px;letter-spacing:0.119px;">Climate File</div>
<div style="position:absolute;left:164px;top:191px;width:235px;height:23px;box-sizing:border-box;border-top:1px solid #808080;border-left:1px solid #808080;border-bottom:1px solid #f8fcf8;border-right:1px solid #f8fcf8;background:#f8fcf8;"></div><div style="position:absolute;left:165px;top:192px;width:233px;height:21px;box-sizing:border-box;border-top:1px solid #404040;border-left:1px solid #404040;border-bottom:1px solid #d0d0c8;border-right:1px solid #d0d0c8;"></div>
<div style="position:absolute;left:166px;top:193px;width:231px;height:19px;overflow:hidden"><div style="position:absolute;top:1.74px;font:normal 13.3px/13.3px 'Liberation Sans', sans-serif;color:#000000;white-space:pre;left:0.50px;letter-spacing:-0.051px;">Holzkirchen; Fraunhofer-IBP, Moisture</div></div>
<div style="position:absolute;left:402px;top:190px;width:89px;height:25px;box-sizing:border-box;border-top:1px solid #f8fcf8;border-left:1px solid #f8fcf8;border-bottom:1px solid #404040;border-right:1px solid #404040;background:#d0d0c8;"></div><div style="position:absolute;left:403px;top:191px;width:87px;height:23px;box-sizing:border-box;border-top:1px solid #d0d0c8;border-left:1px solid #d0d0c8;border-bottom:1px solid #808080;border-right:1px solid #808080;"></div>
<div style="position:absolute;top:195.74px;font:normal 13.3px/13.3px 'Liberation Sans', sans-serif;color:#000000;white-space:pre;left:420.20px;letter-spacing:0.041px;">Details...</div>
<div style="position:absolute;left:496px;top:190px;width:97px;height:25px;box-sizing:border-box;border-top:1px solid #f8fcf8;border-left:1px solid #f8fcf8;border-bottom:1px solid #404040;border-right:1px solid #404040;background:#d0d0c8;"></div><div style="position:absolute;left:497px;top:191px;width:95px;height:23px;box-sizing:border-box;border-top:1px solid #d0d0c8;border-left:1px solid #d0d0c8;border-bottom:1px solid #808080;border-right:1px solid #808080;"></div>
<div style="position:absolute;top:195.74px;font:normal 13.3px/13.3px 'Liberation Sans', sans-serif;color:#000000;white-space:pre;left:516.50px;letter-spacing:-0.078px;">Browse...</div>
<div style="position:absolute;left:44px;top:225px;width:204px;height:22px;box-sizing:border-box;border-top:1px solid #f8fcf8;border-left:1px solid #f8fcf8;border-top-left-radius:2px;border-right:1px solid #808080"></div>
<div style="position:absolute;top:229.74px;font:normal 13.3px/13.3px 'Liberation Sans', sans-serif;color:#000000;white-space:pre;left:50.80px;letter-spacing:0.072px;">Temperature / Relative Humidity</div>
<div style="position:absolute;left:42px;top:246px;width:706px;height:462px;box-sizing:border-box;border-top:1px solid #f8fcf8;border-left:1px solid #f8fcf8;border-bottom:1px solid #404040;border-right:1px solid #404040;"></div>
<div style="position:absolute;left:43px;top:247px;width:704px;height:460px;box-sizing:border-box;border-top:1px solid #d0d0c8;border-left:1px solid #d0d0c8;border-bottom:1px solid #808080;border-right:1px solid #808080;"></div>
<div style="position:absolute;left:248px;top:223px;width:114px;height:25px;box-sizing:border-box;border-top:1px solid #f8fcf8;border-left:1px solid #f8fcf8;border-right:1px solid #404040;background:#d0d0c8;border-top-left-radius:2px"></div>
<div style="position:absolute;left:360px;top:224px;width:1px;height:23px;background:#808080"></div>
<div style="position:absolute;top:228.24px;font:normal 13.3px/13.3px 'Liberation Sans', sans-serif;color:#000000;white-space:pre;left:255.70px;letter-spacing:-0.042px;">Climate Analysis</div>
<div style="position:absolute;top:267.74px;font:normal 13.3px/13.3px 'Liberation Sans', sans-serif;color:#000000;white-space:pre;left:126.20px;letter-spacing:0.105px;">Mean Temperature [°C]:</div>
<div style="position:absolute;top:267.74px;font:normal 13.3px/13.3px 'Liberation Sans', sans-serif;color:#000080;white-space:pre;left:278px;">6.6</div>
<div style="position:absolute;top:283.74px;font:normal 13.3px/13.3px 'Liberation Sans', sans-serif;color:#000000;white-space:pre;left:132.30px;letter-spacing:0.026px;">Max. Temperature [°C]:</div>
<div style="position:absolute;top:283.74px;font:normal 13.3px/13.3px 'Liberation Sans', sans-serif;color:#000080;white-space:pre;left:278px;">32.1</div>
<div style="position:absolute;top:299.74px;font:normal 13.3px/13.3px 'Liberation Sans', sans-serif;color:#000000;white-space:pre;left:136.40px;letter-spacing:0.007px;">Min. Temperature [°C]:</div>
<div style="position:absolute;top:299.74px;font:normal 13.3px/13.3px 'Liberation Sans', sans-serif;color:#000080;white-space:pre;left:278px;">-20.1</div>
<div style="position:absolute;top:323.74px;font:normal 13.3px/13.3px 'Liberation Sans', sans-serif;color:#000000;white-space:pre;left:73.40px;letter-spacing:-0.034px;">Counterradiation Sum [kWh/m²a]:</div>
<div style="position:absolute;top:323.74px;font:normal 13.3px/13.3px 'Liberation Sans', sans-serif;color:#000080;white-space:pre;left:278px;">2668.4</div>
<div style="position:absolute;top:339.74px;font:normal 13.3px/13.3px 'Liberation Sans', sans-serif;color:#000000;white-space:pre;left:143.20px;letter-spacing:-0.032px;">Mean Cloud Index [-]:</div>
<div style="position:absolute;top:339.74px;font:normal 13.3px/13.3px 'Liberation Sans', sans-serif;color:#000080;white-space:pre;left:278px;">—</div>
<div style="position:absolute;top:267.74px;font:normal 13.3px/13.3px 'Liberation Sans', sans-serif;color:#000000;white-space:pre;left:500.10px;letter-spacing:0.088px;">Mean Relative Humidity [%]:</div>
<div style="position:absolute;top:267.74px;font:normal 13.3px/13.3px 'Liberation Sans', sans-serif;color:#000080;white-space:pre;left:678px;">81</div>
<div style="position:absolute;top:283.74px;font:normal 13.3px/13.3px 'Liberation Sans', sans-serif;color:#000000;white-space:pre;left:506.30px;letter-spacing:0.020px;">Max. Relative Humidity [%]:</div>
<div style="position:absolute;top:283.74px;font:normal 13.3px/13.3px 'Liberation Sans', sans-serif;color:#000080;white-space:pre;left:678px;">98</div>
<div style="position:absolute;top:299.74px;font:normal 13.3px/13.3px 'Liberation Sans', sans-serif;color:#000000;white-space:pre;left:510.60px;letter-spacing:-0.003px;">Min. Relative Humidity [%]:</div>
<div style="position:absolute;top:299.74px;font:normal 13.3px/13.3px 'Liberation Sans', sans-serif;color:#000080;white-space:pre;left:678px;">24</div>
<div style="position:absolute;top:323.74px;font:normal 13.3px/13.3px 'Liberation Sans', sans-serif;color:#000000;white-space:pre;left:520.20px;letter-spacing:0.172px;">Mean Wind Speed [m/s]:</div>
<div style="position:absolute;top:323.74px;font:normal 13.3px/13.3px 'Liberation Sans', sans-serif;color:#000080;white-space:pre;left:678px;">2.33</div>
<div style="position:absolute;top:339.74px;font:normal 13.3px/13.3px 'Liberation Sans', sans-serif;color:#000000;white-space:pre;left:515.10px;letter-spacing:0.061px;">Normal Rain Sum [mm/a]:</div>
<div style="position:absolute;top:339.74px;font:normal 13.3px/13.3px 'Liberation Sans', sans-serif;color:#000080;white-space:pre;left:678px;">1185</div>
<div style="position:absolute;left:350px;top:266px;width:97px;height:33px;box-sizing:border-box;border-top:1px solid #f8fcf8;border-left:1px solid #f8fcf8;border-bottom:1px solid #404040;border-right:1px solid #404040;background:#d0d0c8;"></div><div style="position:absolute;left:351px;top:267px;width:95px;height:31px;box-sizing:border-box;border-top:1px solid #d0d0c8;border-left:1px solid #d0d0c8;border-bottom:1px solid #808080;border-right:1px solid #808080;"></div>
<div style="position:absolute;top:275.74px;font:normal 13.3px/13.3px 'Liberation Sans', sans-serif;color:#000000;white-space:pre;left:374.00px;letter-spacing:0.082px;">Analyze</div>
<div style="position:absolute;top:362.15px;font:bold 14px/14px 'Liberation Sans', sans-serif;color:#000000;white-space:pre;left:101.00px;letter-spacing:0.293px;">Solar Radiation Sum [kWh/m²a]</div>
<div style="position:absolute;top:362.15px;font:bold 14px/14px 'Liberation Sans', sans-serif;color:#000000;white-space:pre;left:500.50px;letter-spacing:0.200px;">Driving Rain Sum [mm/a]</div>
<svg style="position:absolute;left:0;top:0" width="1486" height="768" shape-rendering="crispEdges">
<clipPath id="clip211"><circle cx="211" cy="545" r="134.5"/></clipPath>
<g clip-path="url(#clip211)" shape-rendering="crispEdges">
<circle cx="211" cy="545" r="11.6" fill="#f0f800"/>
<polygon points="208.85,534.47 204.14,511.44 217.86,511.44 213.15,534.47" fill="#f8b800"/>
<polygon points="213.04,534.45 217.51,511.37 230.18,516.62 217.02,536.09" fill="#f8bc00"/>
<polygon points="216.93,536.03 229.88,516.42 239.58,526.12 219.97,539.07" fill="#f8cc00"/>
<polygon points="219.91,538.98 239.38,525.82 244.63,538.49 221.55,542.96" fill="#f8e000"/>
<polygon points="221.53,542.85 244.56,538.14 244.56,551.86 221.53,547.15" fill="#f0f000"/>
<polygon points="221.55,547.04 244.63,551.51 239.38,564.18 219.91,551.02" fill="#e0f800"/>
<polygon points="219.97,550.93 239.58,563.88 229.88,573.58 216.93,553.97" fill="#d0f800"/>
<polygon points="217.02,553.91 230.18,573.38 217.51,578.63 213.04,555.55" fill="#c0f800"/>
<polygon points="213.15,555.53 217.86,578.56 204.14,578.56 208.85,555.53" fill="#b8f800"/>
<polygon points="208.96,555.55 204.49,578.63 191.82,573.38 204.98,553.91" fill="#c0f800"/>
<polygon points="205.07,553.97 192.12,573.58 182.42,563.88 202.03,550.93" fill="#d0f800"/>
<polygon points="202.09,551.02 182.62,564.18 177.37,551.51 200.45,547.04" fill="#e0f800"/>
<polygon points="200.47,547.15 177.44,551.86 177.44,538.14 200.47,542.85" fill="#f0f000"/>
<polygon points="200.45,542.96 177.37,538.49 182.62,525.82 202.09,538.98" fill="#f8e000"/>
<polygon points="202.03,539.07 182.42,526.12 192.12,516.42 205.07,536.03" fill="#f8cc00"/>
<polygon points="204.98,536.09 191.82,516.62 204.49,511.37 208.96,534.45" fill="#f8bc00"/>
<polygon points="204.34,512.42 199.64,489.40 222.36,489.40 217.66,512.42" fill="#f87000"/>
<polygon points="217.32,512.36 221.78,489.28 242.78,497.98 229.62,517.45" fill="#f87400"/>
<polygon points="229.33,517.26 242.28,497.65 258.35,513.72 238.74,526.67" fill="#f88800"/>
<polygon points="238.55,526.38 258.02,513.22 266.72,534.22 243.64,538.68" fill="#f8b400"/>
<polygon points="243.58,538.34 266.60,533.64 266.60,556.36 243.58,551.66" fill="#f8e000"/>
<polygon points="243.64,551.32 266.72,555.78 258.02,576.78 238.55,563.62" fill="#e0f800"/>
<polygon points="238.74,563.33 258.35,576.28 242.28,592.35 229.33,572.74" fill="#c0f800"/>
<polygon points="229.62,572.55 242.78,592.02 221.78,600.72 217.32,577.64" fill="#a8f800"/>
<polygon points="217.66,577.58 222.36,600.60 199.64,600.60 204.34,577.58" fill="#a0f800"/>
<polygon points="204.68,577.64 200.22,600.72 179.22,592.02 192.38,572.55" fill="#a8f800"/>
<polygon points="192.67,572.74 179.72,592.35 163.65,576.28 183.26,563.33" fill="#c0f800"/>
<polygon points="183.45,563.62 163.98,576.78 155.28,555.78 178.36,551.32" fill="#e0f800"/>
<polygon points="178.42,551.66 155.40,556.36 155.40,533.64 178.42,538.34" fill="#f8e000"/>
<polygon points="178.36,538.68 155.28,534.22 163.98,513.22 183.45,526.38" fill="#f8b400"/>
<polygon points="183.26,526.67 163.65,513.72 179.72,497.65 192.67,517.26" fill="#f88800"/>
<polygon points="192.38,517.45 179.22,497.98 200.22,489.28 204.68,512.36" fill="#f87400"/>
<polygon points="199.84,490.38 195.13,467.35 226.87,467.35 222.16,490.38" fill="#f02400"/>
<polygon points="221.59,490.27 226.05,467.19 255.37,479.34 242.22,498.81" fill="#f03000"/>
<polygon points="241.73,498.48 254.68,478.88 277.12,501.32 257.52,514.27" fill="#f85800"/>
<polygon points="257.19,513.78 276.66,500.63 288.81,529.95 265.73,534.41" fill="#f88800"/>
<polygon points="265.62,533.84 288.65,529.13 288.65,560.87 265.62,556.16" fill="#f8c400"/>
<polygon points="265.73,555.59 288.81,560.05 276.66,589.37 257.19,576.22" fill="#f0f000"/>
<polygon points="257.52,575.73 277.12,588.68 254.68,611.12 241.73,591.52" fill="#c8f800"/>
<polygon points="242.22,591.19 255.37,610.66 226.05,622.81 221.59,599.73" fill="#a8f800"/>
<polygon points="222.16,599.62 226.87,622.65 195.13,622.65 199.84,599.62" fill="#a0f800"/>
<polygon points="200.41,599.73 195.95,622.81 166.63,610.66 179.78,591.19" fill="#a8f800"/>
<polygon points="180.27,591.52 167.32,611.12 144.88,588.68 164.48,575.73" fill="#c8f800"/>
<polygon points="164.81,576.22 145.34,589.37 133.19,560.05 156.27,555.59" fill="#f0f000"/>
<polygon points="156.38,556.16 133.35,560.87 133.35,529.13 156.38,533.84" fill="#f8c400"/>
<polygon points="156.27,534.41 133.19,529.95 145.34,500.63 164.81,513.78" fill="#f88800"/>
<polygon points="164.48,514.27 144.88,501.32 167.32,478.88 180.27,498.48" fill="#f85800"/>
<polygon points="179.78,498.81 166.63,479.34 195.95,467.19 200.41,490.27" fill="#f03000"/>
<polygon points="195.33,468.33 190.63,445.31 231.37,445.31 226.67,468.33" fill="#e00000"/>
<polygon points="225.86,468.17 230.33,445.10 267.97,460.70 254.81,480.17" fill="#e00800"/>
<polygon points="254.13,479.71 267.09,460.10 295.90,488.91 276.29,501.87" fill="#f02800"/>
<polygon points="275.83,501.19 295.30,488.03 310.90,525.67 287.83,530.14" fill="#f86800"/>
<polygon points="287.67,529.33 310.69,524.63 310.69,565.37 287.67,560.67" fill="#f89800"/>
<polygon points="287.83,559.86 310.90,564.33 295.30,601.97 275.83,588.81" fill="#f8d800"/>
<polygon points="276.29,588.13 295.90,601.09 267.09,629.90 254.13,610.29" fill="#e8f800"/>
<polygon points="254.81,609.83 267.97,629.30 230.33,644.90 225.86,621.83" fill="#d0f800"/>
<polygon points="226.67,621.67 231.37,644.69 190.63,644.69 195.33,621.67" fill="#c8f800"/>
<polygon points="196.14,621.83 191.67,644.90 154.03,629.30 167.19,609.83" fill="#d0f800"/>
<polygon points="167.87,610.29 154.91,629.90 126.10,601.09 145.71,588.13" fill="#e8f800"/>
<polygon points="146.17,588.81 126.70,601.97 111.10,564.33 134.17,559.86" fill="#f8d800"/>
<polygon points="134.33,560.67 111.31,565.37 111.31,524.63 134.33,529.33" fill="#f89800"/>
<polygon points="134.17,530.14 111.10,525.67 126.70,488.03 146.17,501.19" fill="#f86800"/>
<polygon points="145.71,501.87 126.10,488.91 154.91,460.10 167.87,479.71" fill="#f02800"/>
<polygon points="167.19,480.17 154.03,460.70 191.67,445.10 196.14,468.17" fill="#e00800"/>
<polygon points="190.83,446.29 186.12,423.27 235.88,423.27 231.17,446.29" fill="#c00000"/>
<polygon points="230.14,446.08 234.60,423.01 280.57,442.05 267.41,461.52" fill="#d00000"/>
<polygon points="266.53,460.94 279.49,441.33 314.67,476.51 295.06,489.47" fill="#e80c00"/>
<polygon points="294.48,488.59 313.95,475.43 332.99,521.40 309.92,525.86" fill="#f03800"/>
<polygon points="309.71,524.83 332.73,520.12 332.73,569.88 309.71,565.17" fill="#f87800"/>
<polygon points="309.92,564.14 332.99,568.60 313.95,614.57 294.48,601.41" fill="#f8a000"/>
<polygon points="295.06,600.53 314.67,613.49 279.49,648.67 266.53,629.06" fill="#f8d400"/>
<polygon points="267.41,628.48 280.57,647.95 234.60,666.99 230.14,643.92" fill="#f8e800"/>
<polygon points="231.17,643.71 235.88,666.73 186.12,666.73 190.83,643.71" fill="#f8f000"/>
<polygon points="191.86,643.92 187.40,666.99 141.43,647.95 154.59,628.48" fill="#f8e800"/>
<polygon points="155.47,629.06 142.51,648.67 107.33,613.49 126.94,600.53" fill="#f8d400"/>
<polygon points="127.52,601.41 108.05,614.57 89.01,568.60 112.08,564.14" fill="#f8a000"/>
<polygon points="112.29,565.17 89.27,569.88 89.27,520.12 112.29,524.83" fill="#f87800"/>
<polygon points="112.08,525.86 89.01,521.40 108.05,475.43 127.52,488.59" fill="#f03800"/>
<polygon points="126.94,489.47 107.33,476.51 142.51,441.33 155.47,460.94" fill="#e80c00"/>
<polygon points="154.59,461.52 141.43,442.05 187.40,423.01 191.86,446.08" fill="#d00000"/>
<polygon points="186.32,424.25 180.87,397.55 241.13,397.55 235.68,424.25" fill="#b00000"/>
<polygon points="234.41,423.99 239.59,397.24 295.27,420.30 280.01,442.88" fill="#b80000"/>
<polygon points="278.94,442.16 293.96,419.43 336.57,462.04 313.84,477.06" fill="#d80000"/>
<polygon points="313.12,475.99 335.70,460.73 358.76,516.41 332.01,521.59" fill="#e81400"/>
<polygon points="331.75,520.32 358.45,514.87 358.45,575.13 331.75,569.68" fill="#f84000"/>
<polygon points="332.01,568.41 358.76,573.59 335.70,629.27 313.12,614.01" fill="#f87400"/>
<polygon points="313.84,612.94 336.57,627.96 293.96,670.57 278.94,647.84" fill="#f88c00"/>
<polygon points="280.01,647.12 295.27,669.70 239.59,692.76 234.41,666.01" fill="#f89c00"/>
<polygon points="235.68,665.75 241.13,692.45 180.87,692.45 186.32,665.75" fill="#f8a000"/>
<polygon points="187.59,666.01 182.41,692.76 126.73,669.70 141.99,647.12" fill="#f89c00"/>
<polygon points="143.06,647.84 128.04,670.57 85.43,627.96 108.16,612.94" fill="#f88c00"/>
<polygon points="108.88,614.01 86.30,629.27 63.24,573.59 89.99,568.41" fill="#f87400"/>
<polygon points="90.25,569.68 63.55,575.13 63.55,514.87 90.25,520.32" fill="#f84000"/>
<polygon points="89.99,521.59 63.24,516.41 86.30,460.73 108.88,475.99" fill="#e81400"/>
<polygon points="108.16,477.06 85.43,462.04 128.04,419.43 143.06,442.16" fill="#d80000"/>
<polygon points="141.99,442.88 126.73,420.30 182.41,397.24 187.59,423.99" fill="#b80000"/>
</g>
<circle cx="211" cy="545" r="45" fill="none" stroke="#000000" stroke-width="1"/>
<circle cx="211" cy="545" r="90" fill="none" stroke="#000000" stroke-width="1"/>
<circle cx="211" cy="545" r="134.3" fill="none" stroke="#000000" stroke-width="2"/>
<path d="M115.89413793040937 449.8941379304094 L306.1058620695906 640.1058620695907 M306.1058620695906 449.8941379304094 L115.89413793040937 640.1058620695907" stroke="#000000" stroke-width="1"/>
<path d="M211 410.5 V679.5 M76.5 545 H345.5" stroke="#000000" stroke-width="2"/>
<circle cx="585" cy="545" r="23.15" fill="none" stroke="#909090" stroke-width="1"/>
<circle cx="585" cy="545" r="46.30" fill="none" stroke="#909090" stroke-width="1"/>
<circle cx="585" cy="545" r="69.45" fill="none" stroke="#909090" stroke-width="1"/>
<circle cx="585" cy="545" r="92.60" fill="none" stroke="#909090" stroke-width="1"/>
<circle cx="585" cy="545" r="115.75" fill="none" stroke="#909090" stroke-width="1"/>
<circle cx="585" cy="545" r="134.3" fill="none" stroke="#000000" stroke-width="2"/>
<path d="M489.8941379304094 449.8941379304094 L680.1058620695907 640.1058620695907 M680.1058620695907 449.8941379304094 L489.8941379304094 640.1058620695907" stroke="#808080" stroke-width="1"/>
<path d="M585 410.5 V679.5 M450.5 545 H719.5" stroke="#000000" stroke-width="2"/>
<polygon points="585.00,535.51 587.49,538.99 588.96,541.04 590.18,542.86 591.90,545.00 592.27,548.01 591.37,551.37 591.46,560.59 585.00,589.33 553.83,620.24 503.38,626.62 461.10,596.32 452.26,545.00 482.10,502.38 531.23,491.23 571.14,511.53" fill="none" stroke="#0000f0" stroke-width="3" stroke-linejoin="round" shape-rendering="auto"/>
</svg>
<div style="position:absolute;top:391.64px;font:bold 12px/12px 'Liberation Sans', sans-serif;color:#000000;white-space:pre;left:-138.5px;width:700px;text-align:center;">N</div>
<div style="position:absolute;top:687.14px;font:bold 12px/12px 'Liberation Sans', sans-serif;color:#000000;white-space:pre;left:-139px;width:700px;text-align:center;">S</div>
<div style="position:absolute;top:539.14px;font:bold 12px/12px 'Liberation Sans', sans-serif;color:#000000;white-space:pre;left:-287.5px;width:700px;text-align:center;">W</div>
<div style="position:absolute;top:539.14px;font:bold 12px/12px 'Liberation Sans', sans-serif;color:#000000;white-space:pre;left:7px;width:700px;text-align:center;">E</div>
<div style="position:absolute;top:435.64px;font:bold 12px/12px 'Liberation Sans', sans-serif;color:#000000;white-space:pre;left:-242px;width:700px;text-align:center;">NW</div>
<div style="position:absolute;top:435.64px;font:bold 12px/12px 'Liberation Sans', sans-serif;color:#000000;white-space:pre;left:-37px;width:700px;text-align:center;">NE</div>
<div style="position:absolute;top:644.14px;font:bold 12px/12px 'Liberation Sans', sans-serif;color:#000000;white-space:pre;left:-242.5px;width:700px;text-align:center;">SW</div>
<div style="position:absolute;top:644.14px;font:bold 12px/12px 'Liberation Sans', sans-serif;color:#000000;white-space:pre;left:-37px;width:700px;text-align:center;">SE</div>
<div style="position:absolute;top:391.64px;font:bold 12px/12px 'Liberation Sans', sans-serif;color:#000000;white-space:pre;left:235.5px;width:700px;text-align:center;">N</div>
<div style="position:absolute;top:687.14px;font:bold 12px/12px 'Liberation Sans', sans-serif;color:#000000;white-space:pre;left:235px;width:700px;text-align:center;">S</div>
<div style="position:absolute;top:539.14px;font:bold 12px/12px 'Liberation Sans', sans-serif;color:#000000;white-space:pre;left:86.5px;width:700px;text-align:center;">W</div>
<div style="position:absolute;top:539.14px;font:bold 12px/12px 'Liberation Sans', sans-serif;color:#000000;white-space:pre;left:381px;width:700px;text-align:center;">E</div>
<div style="position:absolute;top:435.64px;font:bold 12px/12px 'Liberation Sans', sans-serif;color:#000000;white-space:pre;left:132px;width:700px;text-align:center;">NW</div>
<div style="position:absolute;top:435.64px;font:bold 12px/12px 'Liberation Sans', sans-serif;color:#000000;white-space:pre;left:337px;width:700px;text-align:center;">NE</div>
<div style="position:absolute;top:644.14px;font:bold 12px/12px 'Liberation Sans', sans-serif;color:#000000;white-space:pre;left:131.5px;width:700px;text-align:center;">SW</div>
<div style="position:absolute;top:644.14px;font:bold 12px/12px 'Liberation Sans', sans-serif;color:#000000;white-space:pre;left:337px;width:700px;text-align:center;">SE</div>
<div style="position:absolute;top:503.34px;font:bold 12px/12px 'Liberation Sans', sans-serif;color:#000000;white-space:pre;left:215px;">30°</div>
<div style="position:absolute;top:459.34px;font:bold 12px/12px 'Liberation Sans', sans-serif;color:#000000;white-space:pre;left:215px;">60°</div>
<div style="position:absolute;top:414.34px;font:bold 12px/12px 'Liberation Sans', sans-serif;color:#000000;white-space:pre;left:215px;">90°</div>
<div style="position:absolute;top:538.44px;font:bold 13.3px/13.3px 'Liberation Sans', sans-serif;color:#000000;white-space:pre;left:589px;">0</div>
<div style="position:absolute;top:515.29px;font:bold 13.3px/13.3px 'Liberation Sans', sans-serif;color:#000000;white-space:pre;left:589px;">100</div>
<div style="position:absolute;top:492.14px;font:bold 13.3px/13.3px 'Liberation Sans', sans-serif;color:#000000;white-space:pre;left:589px;">200</div>
<div style="position:absolute;top:468.99px;font:bold 13.3px/13.3px 'Liberation Sans', sans-serif;color:#000000;white-space:pre;left:589px;">300</div>
<div style="position:absolute;top:445.84px;font:bold 13.3px/13.3px 'Liberation Sans', sans-serif;color:#000000;white-space:pre;left:589px;">400</div>
<div style="position:absolute;top:422.69px;font:bold 13.3px/13.3px 'Liberation Sans', sans-serif;color:#000000;white-space:pre;left:589px;">500</div>
<div style="position:absolute;left:38px;top:722px;width:714px;height:16px;background:#d0d0c8"></div>
<div style="position:absolute;left:38px;top:722px;width:16px;height:16px;box-sizing:border-box;border-top:1px solid #f8fcf8;border-left:1px solid #f8fcf8;border-bottom:1px solid #404040;border-right:1px solid #404040;background:#d0d0c8;"></div><div style="position:absolute;left:39px;top:723px;width:14px;height:14px;box-sizing:border-box;border-top:1px solid #d0d0c8;border-left:1px solid #d0d0c8;border-bottom:1px solid #808080;border-right:1px solid #808080;"></div>
<svg style="position:absolute;left:0;top:0;overflow:visible" width="1" height="1"><polygon points="48,726 48,734 44,730" fill="#000000"/></svg>
<div style="position:absolute;left:54px;top:722px;width:676px;height:16px;box-sizing:border-box;border-top:1px solid #f8fcf8;border-left:1px solid #f8fcf8;border-bottom:1px solid #404040;border-right:1px solid #404040;background:#d0d0c8;"></div><div style="position:absolute;left:55px;top:723px;width:674px;height:14px;box-sizing:border-box;border-top:1px solid #d0d0c8;border-left:1px solid #d0d0c8;border-bottom:1px solid #808080;border-right:1px solid #808080;"></div>
<div style="position:absolute;left:730px;top:722px;width:7px;height:16px;background-color:#f8fcf8;background-image:linear-gradient(45deg,#d0d0c8 25%,transparent 25%,transparent 75%,#d0d0c8 75%),linear-gradient(45deg,#d0d0c8 25%,transparent 25%,transparent 75%,#d0d0c8 75%);background-size:2px 2px;background-position:0 0,1px 1px;"></div>
<div style="position:absolute;left:737px;top:722px;width:15px;height:16px;box-sizing:border-box;border-top:1px solid #f8fcf8;border-left:1px solid #f8fcf8;border-bottom:1px solid #404040;border-right:1px solid #404040;background:#d0d0c8;"></div><div style="position:absolute;left:738px;top:723px;width:13px;height:14px;box-sizing:border-box;border-top:1px solid #d0d0c8;border-left:1px solid #d0d0c8;border-bottom:1px solid #808080;border-right:1px solid #808080;"></div>
<svg style="position:absolute;left:0;top:0;overflow:visible" width="1" height="1"><polygon points="742,726 742,734 746,730" fill="#000000"/></svg>
<div style="position:absolute;left:3px;top:742px;width:100px;height:21px;box-sizing:border-box;border-top:1px solid #808080;border-left:1px solid #808080;border-bottom:1px solid #f8fcf8;border-right:1px solid #f8fcf8;"></div>
<div style="position:absolute;top:746.69px;font:normal 11px/11px 'Liberation Sans', sans-serif;color:#000000;white-space:pre;left:4.60px;letter-spacing:-0.101px;">Units: SI</div>
<div style="position:absolute;left:105px;top:742px;width:649px;height:21px;box-sizing:border-box;border-top:1px solid #808080;border-left:1px solid #808080;border-bottom:1px solid #f8fcf8;border-right:1px solid #f8fcf8;"></div>
<div style="position:absolute;top:746.69px;font:normal 11px/11px 'Liberation Sans', sans-serif;color:#000000;white-space:pre;left:106.70px;letter-spacing:-0.179px;">No calculation results available.</div>
<div style="position:absolute;left:740px;top:749px;width:14px;height:14px;background:#d0d0c8"></div>
<svg style="position:absolute;left:740px;top:749px" width="14" height="14"><path d="M14 0 L0 14" stroke="#f8fcf8" stroke-width="1.2"/><path d="M13.6 2.4 L2.4 13.6 M13.6 6.4 L6.4 13.6 M13.6 10.4 L10.4 13.6" stroke="#808080" stroke-width="1.7"/><path d="M14 4 L4 14 M14 8 L8 14 M14 12 L12 14" stroke="#f8fcf8" stroke-width="0.8" opacity="0.7"/></svg>
</div>
</body></html>
